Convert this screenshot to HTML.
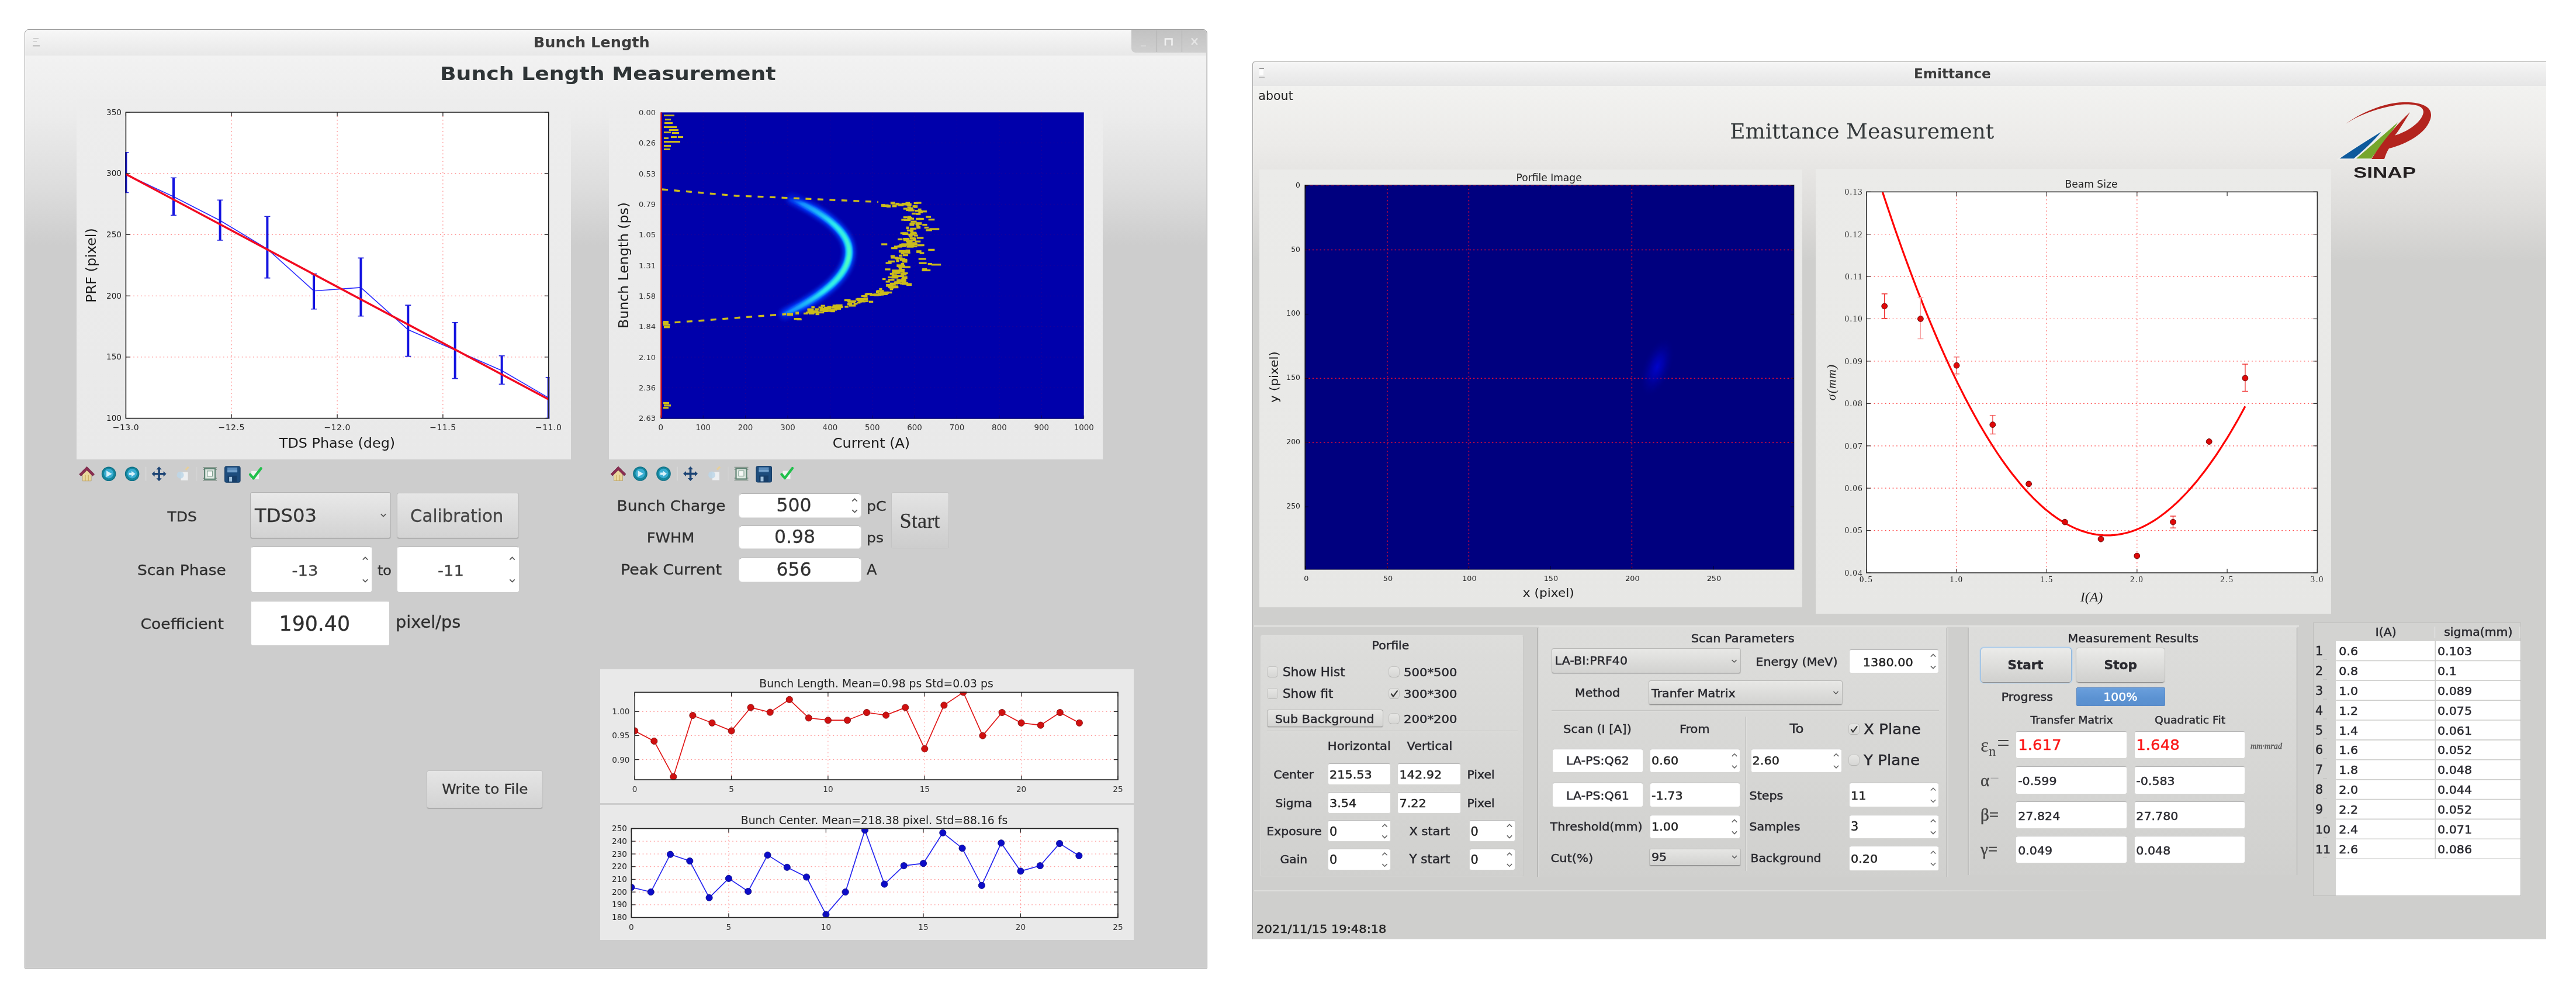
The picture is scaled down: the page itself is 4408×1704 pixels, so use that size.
<!DOCTYPE html>
<html><head><meta charset="utf-8"><title>Bunch Length / Emittance</title>
<style>
html,body{margin:0;padding:0;background:#fff;}
#page{filter:blur(0.75px);position:relative;width:4408px;height:1704px;overflow:hidden;background:#fff;font-family:"DejaVu Sans","Liberation Sans",sans-serif;}
#page>div{position:absolute;box-sizing:border-box;}
#ov{position:absolute;left:0;top:0;}
#ov text{font-family:"DejaVu Sans","Liberation Sans",sans-serif;}
#ov text.se{font-family:"DejaVu Serif","Liberation Serif",serif;}
#ov text.ls{font-family:"Liberation Serif","DejaVu Serif",serif;}
#ov text.lb{font-family:"Liberation Sans","DejaVu Sans",sans-serif;}
</style></head><body>
<div id="page">
<div style="left:41.5px;top:49.5px;width:2024.0px;height:1607.0px;background:#cdcdcd;border:1.5px solid #9c9c9c;border-radius:7px 7px 0 0;overflow:hidden;"></div>
<div style="left:43.0px;top:95.0px;width:2021.0px;height:1560.0px;background:linear-gradient(#f2f2f2 0px,#ececec 100px,#dddddd 225px,#cdcdcd 325px,#cdcdcd 100%);"></div>
<div style="left:43.0px;top:51.0px;width:2021.0px;height:44.0px;background:linear-gradient(#f7f7f7,#f0f0f0 45%,#e8e8e8);border-radius:6px 6px 0 0;"></div>
<div style="left:1936.0px;top:51.0px;width:128.0px;height:39.0px;background:linear-gradient(#c2c2c2,#cfcfcf);border-radius:0 6px 0 6px;border-bottom-left-radius:7px;"></div>
<div style="left:131.0px;top:169.0px;width:846.0px;height:617.0px;background:linear-gradient(#ededed,#e9e9e9);"></div>
<div style="left:1042.0px;top:172.0px;width:845.0px;height:614.0px;background:linear-gradient(#ededed,#e9e9e9);"></div>
<div style="left:427.5px;top:842.0px;width:241.5px;height:78.5px;background:linear-gradient(#e9e9e9,#d2d2d2);border:1px solid #b2b2b2;border-bottom-color:#8e8e8e;border-radius:4px;box-shadow:0 1px 1px rgba(0,0,0,.12);"></div>
<div style="left:679.0px;top:843.0px;width:209.0px;height:77.5px;background:linear-gradient(#e6e6e6,#d3d3d3);border:1px solid #bcbcbc;border-bottom-color:#8e8e8e;border-radius:4px;box-shadow:0 1px 1px rgba(0,0,0,.12);"></div>
<div style="left:429.5px;top:934.6px;width:206.5px;height:78.4px;background:#fff;border:1px solid #fff;border-top-color:#b4b4b4;border-radius:4px;"></div>
<div style="left:679.6px;top:934.6px;width:208.4px;height:78.4px;background:#fff;border:1px solid #fff;border-top-color:#b4b4b4;border-radius:4px;"></div>
<div style="left:429.5px;top:1028.0px;width:236.9px;height:76.4px;background:#fff;border:1px solid #fff;border-top-color:#b4b4b4;border-radius:3px;"></div>
<div style="left:729.5px;top:1317.5px;width:199.0px;height:65.0px;background:linear-gradient(#e5e5e5,#d3d3d3);border:1px solid #c2c2c2;border-bottom-color:#8e8e8e;border-radius:4px;box-shadow:0 1px 1px rgba(0,0,0,.12);"></div>
<div style="left:1264.0px;top:844.0px;width:210.0px;height:41.7px;background:#fff;border:1px solid #e4e4e4;border-top-color:#b4b4b4;border-radius:6px;"></div>
<div style="left:1525.0px;top:842.0px;width:98.5px;height:97.0px;background:linear-gradient(#e4e4e4,#d3d3d3 70%,#cdcdcd);border:1px solid #c4c4c4;border-bottom-color:#cacaca;border-radius:4px;"></div>
<div style="left:1264.0px;top:898.5px;width:210.0px;height:40.8px;background:#fff;border:1px solid #e4e4e4;border-top-color:#b4b4b4;border-radius:6px;"></div>
<div style="left:1264.0px;top:954.0px;width:210.0px;height:41.6px;background:#fff;border:1px solid #e4e4e4;border-top-color:#b4b4b4;border-radius:6px;"></div>
<div style="left:1027.0px;top:1144.5px;width:912.5px;height:229.5px;background:#e9e9e9;"></div>
<div style="left:1027.0px;top:1377.0px;width:912.5px;height:231.0px;background:#e9e9e9;"></div>
<div style="left:2142.5px;top:104.0px;width:2214.5px;height:1502.5px;background:#cfcfcd;border-left:1.5px solid #a6a6a6;border-top:1.5px solid #c4c4c4;border-radius:6px 0 0 0;overflow:hidden;"></div>
<div style="left:2144.0px;top:147.0px;width:2213.0px;height:1459.5px;background:linear-gradient(#f2f2f0 0px,#ecebe9 100px,#dddcda 215px,#cfcfcd 300px,#cfcfcd 100%);"></div>
<div style="left:2144.0px;top:105.5px;width:2213.0px;height:41.5px;background:linear-gradient(#f6f6f6,#eeeeee 45%,#e6e6e6);border-radius:5px 0 0 0;"></div>
<div style="left:2155.3px;top:290.0px;width:928.5px;height:749.2px;background:linear-gradient(#ebebe9,#e7e7e5);"></div>
<div style="left:3106.5px;top:289.0px;width:882.5px;height:761.0px;background:linear-gradient(#ebebe9,#e7e7e5);"></div>
<div style="left:2146.0px;top:1069.5px;width:1788.0px;height:2.0px;background:#e4e4e2;"></div>
<div style="left:2146.0px;top:1523.0px;width:1500.0px;height:2.0px;background:linear-gradient(90deg,#dededc,#dededc 70%,rgba(222,222,220,0));"></div>
<div style="left:2156.5px;top:1086.5px;width:450.5px;height:413.5px;background:linear-gradient(#dddddb,#d6d6d4 60%,#d0d0ce);border:1.5px solid #c8c8c6;border-top-color:#e2e2e0;border-left-color:#dcdcda;border-bottom-color:#d2d2d0;border-radius:3px;"></div>
<div style="left:2633.0px;top:1072.0px;width:698.0px;height:428.0px;background:linear-gradient(#dddddb,#d6d6d4 60%,#d0d0ce);"></div>
<div style="left:3369.0px;top:1072.0px;width:561.0px;height:425.0px;background:linear-gradient(#dddddb,#d6d6d4 60%,#d0d0ce);"></div>
<div style="left:2168.4px;top:1139.8px;width:19.0px;height:19.0px;background:linear-gradient(#e6e6e4,#d6d6d4);border:1.3px solid #c3c3c1;border-bottom-color:#b4b4b2;border-radius:5px;"></div>
<div style="left:2168.4px;top:1176.8px;width:19.0px;height:19.0px;background:linear-gradient(#e6e6e4,#d6d6d4);border:1.3px solid #c3c3c1;border-bottom-color:#b4b4b2;border-radius:5px;"></div>
<div style="left:2376.0px;top:1139.8px;width:19.0px;height:19.0px;background:linear-gradient(#e6e6e4,#d6d6d4);border:1.3px solid #c3c3c1;border-bottom-color:#b4b4b2;border-radius:6px;"></div>
<div style="left:2376.0px;top:1176.8px;width:19.0px;height:19.0px;background:linear-gradient(#e6e6e4,#d6d6d4);border:1.3px solid #c3c3c1;border-bottom-color:#b4b4b2;border-radius:6px;"></div>
<div style="left:2376.0px;top:1219.5px;width:19.0px;height:19.0px;background:linear-gradient(#e6e6e4,#d6d6d4);border:1.3px solid #c3c3c1;border-bottom-color:#b4b4b2;border-radius:6px;"></div>
<div style="left:2167.9px;top:1214.0px;width:198.8px;height:29.8px;background:linear-gradient(#e6e6e4,#d4d4d2);border:1px solid #b4b4b2;border-bottom-color:#8e8e8e;border-radius:4px;box-shadow:0 1px 1px rgba(0,0,0,.12);"></div>
<div style="left:2271.8px;top:1305.9px;width:108.0px;height:37.4px;background:#fff;border:1px solid #d6d6d4;border-top-color:#b4b4b4;border-radius:4px;"></div>
<div style="left:2391.2px;top:1305.9px;width:109.2px;height:37.4px;background:#fff;border:1px solid #d6d6d4;border-top-color:#b4b4b4;border-radius:4px;"></div>
<div style="left:2271.8px;top:1354.6px;width:108.0px;height:37.1px;background:#fff;border:1px solid #d6d6d4;border-top-color:#b4b4b4;border-radius:4px;"></div>
<div style="left:2391.2px;top:1354.6px;width:109.2px;height:37.1px;background:#fff;border:1px solid #d6d6d4;border-top-color:#b4b4b4;border-radius:4px;"></div>
<div style="left:2271.8px;top:1403.3px;width:108.0px;height:37.1px;background:#fff;border:1px solid #d6d6d4;border-top-color:#b4b4b4;border-radius:4px;"></div>
<div style="left:2513.6px;top:1403.3px;width:79.4px;height:37.1px;background:#fff;border:1px solid #d6d6d4;border-top-color:#b4b4b4;border-radius:4px;"></div>
<div style="left:2271.8px;top:1452.3px;width:108.0px;height:36.8px;background:#fff;border:1px solid #d6d6d4;border-top-color:#b4b4b4;border-radius:4px;"></div>
<div style="left:2513.6px;top:1452.3px;width:79.4px;height:36.8px;background:#fff;border:1px solid #d6d6d4;border-top-color:#b4b4b4;border-radius:4px;"></div>
<div style="left:2654.9px;top:1109.1px;width:323.8px;height:42.8px;background:linear-gradient(#e8e8e6,#d2d2d0);border:1px solid #b8b8b6;border-bottom-color:#8e8e8e;border-radius:4px;box-shadow:0 1px 1px rgba(0,0,0,.12);"></div>
<div style="left:3164.4px;top:1110.6px;width:153.4px;height:41.9px;background:#fff;border:1px solid #d6d6d4;border-top-color:#b4b4b4;border-radius:4px;"></div>
<div style="left:2820.9px;top:1164.1px;width:332.4px;height:41.6px;background:linear-gradient(#e8e8e6,#d2d2d0);border:1px solid #b8b8b6;border-bottom-color:#8e8e8e;border-radius:4px;box-shadow:0 1px 1px rgba(0,0,0,.12);"></div>
<div style="left:3163.0px;top:1238.0px;width:18.5px;height:18.5px;background:linear-gradient(#e6e6e4,#d6d6d4);border:1.3px solid #c3c3c1;border-bottom-color:#b4b4b2;border-radius:5px;"></div>
<div style="left:3163.0px;top:1291.0px;width:18.5px;height:18.5px;background:linear-gradient(#e6e6e4,#d6d6d4);border:1.3px solid #c3c3c1;border-bottom-color:#b4b4b2;border-radius:6px;"></div>
<div style="left:2656.4px;top:1281.4px;width:155.2px;height:40.8px;background:#fff;border:1px solid #d6d6d4;border-top-color:#b4b4b4;border-radius:4px;"></div>
<div style="left:2822.9px;top:1281.4px;width:155.2px;height:40.8px;background:#fff;border:1px solid #d6d6d4;border-top-color:#b4b4b4;border-radius:4px;"></div>
<div style="left:2995.5px;top:1281.4px;width:156.7px;height:40.8px;background:#fff;border:1px solid #d6d6d4;border-top-color:#b4b4b4;border-radius:4px;"></div>
<div style="left:2656.4px;top:1339.3px;width:155.2px;height:42.2px;background:#fff;border:1px solid #d6d6d4;border-top-color:#b4b4b4;border-radius:4px;"></div>
<div style="left:2822.9px;top:1339.3px;width:155.2px;height:42.2px;background:#fff;border:1px solid #d6d6d4;border-top-color:#b4b4b4;border-radius:4px;"></div>
<div style="left:3163.8px;top:1339.3px;width:154.0px;height:42.2px;background:#fff;border:1px solid #d6d6d4;border-top-color:#b4b4b4;border-radius:4px;"></div>
<div style="left:2822.9px;top:1393.7px;width:155.2px;height:41.7px;background:#fff;border:1px solid #d6d6d4;border-top-color:#b4b4b4;border-radius:4px;"></div>
<div style="left:3163.8px;top:1393.7px;width:154.0px;height:41.7px;background:#fff;border:1px solid #d6d6d4;border-top-color:#b4b4b4;border-radius:4px;"></div>
<div style="left:2821.5px;top:1452.0px;width:157.2px;height:28.5px;background:linear-gradient(#e6e6e4,#d2d2d0);border:1px solid #b8b8b6;border-bottom-color:#8e8e8e;border-radius:3px;box-shadow:0 1px 1px rgba(0,0,0,.12);"></div>
<div style="left:3163.8px;top:1447.0px;width:154.0px;height:42.8px;background:#fff;border:1px solid #d6d6d4;border-top-color:#b4b4b4;border-radius:4px;"></div>
<div style="left:3389.4px;top:1108.0px;width:155.6px;height:60.0px;background:linear-gradient(#ebebe9,#d0d0ce);border:1px solid #8fb6dc;border-bottom-color:#8e8e8e;border-radius:5px;box-shadow:0 1px 1px rgba(0,0,0,.12);box-shadow:0 0 0 1.5px #bcd6ee;"></div>
<div style="left:3552.1px;top:1108.0px;width:152.7px;height:60.0px;background:linear-gradient(#ebebe9,#d0d0ce);border:1px solid #bcbcba;border-bottom-color:#8e8e8e;border-radius:5px;box-shadow:0 1px 1px rgba(0,0,0,.12);"></div>
<div style="left:3552.6px;top:1176.2px;width:152.2px;height:31.5px;background:linear-gradient(#6a9fdc,#5b92d2 60%,#5a8fce);border:1px solid #5586c4;border-radius:2px;"></div>
<div style="left:3449.2px;top:1250.6px;width:191.3px;height:47.3px;background:#fff;border:1px solid #d6d6d4;border-top-color:#b4b4b4;border-radius:4px;"></div>
<div style="left:3651.8px;top:1250.6px;width:190.5px;height:47.3px;background:#fff;border:1px solid #d6d6d4;border-top-color:#b4b4b4;border-radius:4px;"></div>
<div style="left:3449.2px;top:1310.5px;width:191.3px;height:48.4px;background:#fff;border:1px solid #d6d6d4;border-top-color:#b4b4b4;border-radius:4px;"></div>
<div style="left:3651.8px;top:1310.5px;width:190.5px;height:48.4px;background:#fff;border:1px solid #d6d6d4;border-top-color:#b4b4b4;border-radius:4px;"></div>
<div style="left:3449.2px;top:1370.5px;width:191.3px;height:47.2px;background:#fff;border:1px solid #d6d6d4;border-top-color:#b4b4b4;border-radius:4px;"></div>
<div style="left:3651.8px;top:1370.5px;width:190.5px;height:47.2px;background:#fff;border:1px solid #d6d6d4;border-top-color:#b4b4b4;border-radius:4px;"></div>
<div style="left:3449.2px;top:1430.3px;width:191.3px;height:47.2px;background:#fff;border:1px solid #d6d6d4;border-top-color:#b4b4b4;border-radius:4px;"></div>
<div style="left:3651.8px;top:1430.3px;width:190.5px;height:47.2px;background:#fff;border:1px solid #d6d6d4;border-top-color:#b4b4b4;border-radius:4px;"></div>
<div style="left:3957.7px;top:1065.0px;width:356.3px;height:468.0px;background:#d3d3d1;border:1.3px solid #bdbdbb;"></div>
<div style="left:3997.3px;top:1096.5px;width:315.7px;height:435.5px;background:#fff;"></div>
<svg id="ov" width="4408" height="1704" viewBox="0 0 4408 1704">
<defs>
<filter id="bl3" x="-20%" y="-20%" width="140%" height="140%"><feGaussianBlur stdDeviation="3.2"/></filter>
<filter id="bl1" x="-20%" y="-20%" width="140%" height="140%"><feGaussianBlur stdDeviation="1.1"/></filter>
<filter id="bl05" x="-20%" y="-20%" width="140%" height="140%"><feGaussianBlur stdDeviation="0.6"/></filter>
<linearGradient id="cres" gradientUnits="userSpaceOnUse" x1="0" y1="338" x2="0" y2="544"><stop offset="0" stop-color="#0a3cff" stop-opacity="0"/><stop offset="0.05" stop-color="#1490ff"/><stop offset="0.22" stop-color="#2ce8f0"/><stop offset="0.5" stop-color="#50ffc0"/><stop offset="0.78" stop-color="#2ce8f0"/><stop offset="0.95" stop-color="#1490ff"/><stop offset="1" stop-color="#0a3cff" stop-opacity="0"/></linearGradient>
<linearGradient id="cresm" gradientUnits="userSpaceOnUse" x1="0" y1="336" x2="0" y2="542"><stop offset="0" stop-color="#0a50ff" stop-opacity="0"/><stop offset="0.1" stop-color="#0c70ff" stop-opacity="0.9"/><stop offset="0.3" stop-color="#10b0ff"/><stop offset="0.5" stop-color="#14c8ff"/><stop offset="0.7" stop-color="#10b0ff"/><stop offset="0.9" stop-color="#0c70ff" stop-opacity="0.9"/><stop offset="1" stop-color="#0a50ff" stop-opacity="0"/></linearGradient>
<linearGradient id="cresg" gradientUnits="userSpaceOnUse" x1="0" y1="330" x2="0" y2="552"><stop offset="0" stop-color="#0030ff" stop-opacity="0.2"/><stop offset="0.12" stop-color="#0038ff" stop-opacity="0.95"/><stop offset="0.5" stop-color="#0050ff" stop-opacity="0.95"/><stop offset="0.88" stop-color="#0038ff" stop-opacity="0.95"/><stop offset="1" stop-color="#0030ff" stop-opacity="0.2"/></linearGradient>
<radialGradient id="spot"><stop offset="0" stop-color="#0004d0" stop-opacity="0.95"/><stop offset="0.4" stop-color="#0002b8" stop-opacity="0.7"/><stop offset="1" stop-color="#000090" stop-opacity="0"/></radialGradient>
</defs>
<line x1="1979.5" y1="52.0" x2="1979.5" y2="89.0" stroke="#b4b4b4" stroke-width="1.2"/>
<line x1="2022.5" y1="52.0" x2="2022.5" y2="89.0" stroke="#b4b4b4" stroke-width="1.2"/>
<line x1="1952.0" y1="78.5" x2="1961.0" y2="78.5" stroke="#dcdcdc" stroke-width="1.8"/>
<rect x="1994" y="66.5" width="11.5" height="10" fill="none" stroke="#f0f0f0" stroke-width="2.6"/>
<rect x="1995.5" y="72.5" width="8.5" height="5.5" fill="#c9c9c9"/>
<path d="M2039 65.5 L2049 76.5 M2049 65.5 L2039 76.5" stroke="#e6e6e6" stroke-width="2.6" fill="none"/>
<rect x="57.0" y="65.0" width="9.0" height="2.0" fill="#cfcfcf"/>
<rect x="57.0" y="70.0" width="6.0" height="2.0" fill="#d4d4d4"/>
<rect x="56.0" y="77.0" width="12.0" height="2.5" fill="#c4c4c4"/>
<text x="912.8" y="81.3" font-size="24.20" font-weight="bold" fill="#3c3c3c" textLength="198.9" lengthAdjust="spacingAndGlyphs">Bunch Length</text>
<text x="753.0" y="137.3" font-size="32.40" font-weight="bold" fill="#2e3436" textLength="574.7" lengthAdjust="spacingAndGlyphs">Bunch Length Measurement</text>
<rect x="215.4" y="192.0" width="723.3" height="523.6" fill="#fff"/>
<line x1="396.2" y1="192.0" x2="396.2" y2="715.6" stroke="#ff0000" stroke-width="1.0" stroke-dasharray="1.8 4.6" opacity="0.55"/>
<line x1="577.1" y1="192.0" x2="577.1" y2="715.6" stroke="#ff0000" stroke-width="1.0" stroke-dasharray="1.8 4.6" opacity="0.55"/>
<line x1="757.9" y1="192.0" x2="757.9" y2="715.6" stroke="#ff0000" stroke-width="1.0" stroke-dasharray="1.8 4.6" opacity="0.55"/>
<line x1="215.4" y1="296.7" x2="938.7" y2="296.7" stroke="#ff0000" stroke-width="1.0" stroke-dasharray="1.8 4.6" opacity="0.55"/>
<line x1="215.4" y1="401.4" x2="938.7" y2="401.4" stroke="#ff0000" stroke-width="1.0" stroke-dasharray="1.8 4.6" opacity="0.55"/>
<line x1="215.4" y1="506.2" x2="938.7" y2="506.2" stroke="#ff0000" stroke-width="1.0" stroke-dasharray="1.8 4.6" opacity="0.55"/>
<line x1="215.4" y1="610.9" x2="938.7" y2="610.9" stroke="#ff0000" stroke-width="1.0" stroke-dasharray="1.8 4.6" opacity="0.55"/>
<clipPath id="c1"><rect x="214" y="191" width="726.5" height="525.5"/></clipPath>
<g clip-path="url(#c1)">
<path d="M215.4 298.4 L297.0 336.5 L376.6 377.3 L457.4 425.8 L537.0 497.7 L617.5 491.9 L698.3 564.1 L778.7 599.0 L858.7 634.0 L938.7 680.6" stroke="#2a2aff" stroke-width="1.6" fill="none"/>
<line x1="215.4" y1="260.7" x2="215.4" y2="329.5" stroke="#1414e0" stroke-width="4"/>
<line x1="210.4" y1="260.7" x2="220.4" y2="260.7" stroke="#2222dd" stroke-width="1.6"/>
<line x1="210.4" y1="329.5" x2="220.4" y2="329.5" stroke="#2222dd" stroke-width="1.6"/>
<line x1="297.0" y1="304.2" x2="297.0" y2="368.3" stroke="#1414e0" stroke-width="4"/>
<line x1="292.0" y1="304.2" x2="302.0" y2="304.2" stroke="#2222dd" stroke-width="1.6"/>
<line x1="292.0" y1="368.3" x2="302.0" y2="368.3" stroke="#2222dd" stroke-width="1.6"/>
<line x1="376.6" y1="342.3" x2="376.6" y2="411.0" stroke="#1414e0" stroke-width="4"/>
<line x1="371.6" y1="342.3" x2="381.6" y2="342.3" stroke="#2222dd" stroke-width="1.6"/>
<line x1="371.6" y1="411.0" x2="381.6" y2="411.0" stroke="#2222dd" stroke-width="1.6"/>
<line x1="457.4" y1="370.3" x2="457.4" y2="475.6" stroke="#1414e0" stroke-width="4"/>
<line x1="452.4" y1="370.3" x2="462.4" y2="370.3" stroke="#2222dd" stroke-width="1.6"/>
<line x1="452.4" y1="475.6" x2="462.4" y2="475.6" stroke="#2222dd" stroke-width="1.6"/>
<line x1="537.0" y1="468.6" x2="537.0" y2="528.8" stroke="#1414e0" stroke-width="4"/>
<line x1="532.0" y1="468.6" x2="542.0" y2="468.6" stroke="#2222dd" stroke-width="1.6"/>
<line x1="532.0" y1="528.8" x2="542.0" y2="528.8" stroke="#2222dd" stroke-width="1.6"/>
<line x1="617.5" y1="441.4" x2="617.5" y2="540.8" stroke="#1414e0" stroke-width="4"/>
<line x1="612.5" y1="441.4" x2="622.5" y2="441.4" stroke="#2222dd" stroke-width="1.6"/>
<line x1="612.5" y1="540.8" x2="622.5" y2="540.8" stroke="#2222dd" stroke-width="1.6"/>
<line x1="698.3" y1="522.1" x2="698.3" y2="609.6" stroke="#1414e0" stroke-width="4"/>
<line x1="693.3" y1="522.1" x2="703.3" y2="522.1" stroke="#2222dd" stroke-width="1.6"/>
<line x1="693.3" y1="609.6" x2="703.3" y2="609.6" stroke="#2222dd" stroke-width="1.6"/>
<line x1="778.7" y1="551.7" x2="778.7" y2="647.6" stroke="#1414e0" stroke-width="4"/>
<line x1="773.7" y1="551.7" x2="783.7" y2="551.7" stroke="#2222dd" stroke-width="1.6"/>
<line x1="773.7" y1="647.6" x2="783.7" y2="647.6" stroke="#2222dd" stroke-width="1.6"/>
<line x1="858.7" y1="608.8" x2="858.7" y2="657.3" stroke="#1414e0" stroke-width="4"/>
<line x1="853.7" y1="608.8" x2="863.7" y2="608.8" stroke="#2222dd" stroke-width="1.6"/>
<line x1="853.7" y1="657.3" x2="863.7" y2="657.3" stroke="#2222dd" stroke-width="1.6"/>
<line x1="938.7" y1="645.7" x2="938.7" y2="715.6" stroke="#1414e0" stroke-width="4"/>
<line x1="933.7" y1="645.7" x2="943.7" y2="645.7" stroke="#2222dd" stroke-width="1.6"/>
<line x1="933.7" y1="715.6" x2="943.7" y2="715.6" stroke="#2222dd" stroke-width="1.6"/>
<line x1="215.4" y1="297.9" x2="938.7" y2="683.3" stroke="#f20a20" stroke-width="3.5"/>
</g>
<line x1="215.4" y1="715.6" x2="215.4" y2="708.6" stroke="#222" stroke-width="1.2"/>
<line x1="215.4" y1="192.0" x2="215.4" y2="199.0" stroke="#222" stroke-width="1.2"/>
<line x1="396.2" y1="715.6" x2="396.2" y2="708.6" stroke="#222" stroke-width="1.2"/>
<line x1="396.2" y1="192.0" x2="396.2" y2="199.0" stroke="#222" stroke-width="1.2"/>
<line x1="577.1" y1="715.6" x2="577.1" y2="708.6" stroke="#222" stroke-width="1.2"/>
<line x1="577.1" y1="192.0" x2="577.1" y2="199.0" stroke="#222" stroke-width="1.2"/>
<line x1="757.9" y1="715.6" x2="757.9" y2="708.6" stroke="#222" stroke-width="1.2"/>
<line x1="757.9" y1="192.0" x2="757.9" y2="199.0" stroke="#222" stroke-width="1.2"/>
<line x1="938.7" y1="715.6" x2="938.7" y2="708.6" stroke="#222" stroke-width="1.2"/>
<line x1="938.7" y1="192.0" x2="938.7" y2="199.0" stroke="#222" stroke-width="1.2"/>
<line x1="215.4" y1="192.0" x2="222.4" y2="192.0" stroke="#222" stroke-width="1.2"/>
<line x1="938.7" y1="192.0" x2="931.7" y2="192.0" stroke="#222" stroke-width="1.2"/>
<line x1="215.4" y1="296.7" x2="222.4" y2="296.7" stroke="#222" stroke-width="1.2"/>
<line x1="938.7" y1="296.7" x2="931.7" y2="296.7" stroke="#222" stroke-width="1.2"/>
<line x1="215.4" y1="401.4" x2="222.4" y2="401.4" stroke="#222" stroke-width="1.2"/>
<line x1="938.7" y1="401.4" x2="931.7" y2="401.4" stroke="#222" stroke-width="1.2"/>
<line x1="215.4" y1="506.2" x2="222.4" y2="506.2" stroke="#222" stroke-width="1.2"/>
<line x1="938.7" y1="506.2" x2="931.7" y2="506.2" stroke="#222" stroke-width="1.2"/>
<line x1="215.4" y1="610.9" x2="222.4" y2="610.9" stroke="#222" stroke-width="1.2"/>
<line x1="938.7" y1="610.9" x2="931.7" y2="610.9" stroke="#222" stroke-width="1.2"/>
<line x1="215.4" y1="715.6" x2="222.4" y2="715.6" stroke="#222" stroke-width="1.2"/>
<line x1="938.7" y1="715.6" x2="931.7" y2="715.6" stroke="#222" stroke-width="1.2"/>
<rect x="215.4" y="192.0" width="723.3" height="523.6" fill="none" stroke="#222" stroke-width="1.6"/>
<text x="208.0" y="196.5" font-size="13.60" text-anchor="end" fill="#222">350</text>
<text x="208.0" y="301.2" font-size="13.60" text-anchor="end" fill="#222">300</text>
<text x="208.0" y="405.9" font-size="13.60" text-anchor="end" fill="#222">250</text>
<text x="208.0" y="510.7" font-size="13.60" text-anchor="end" fill="#222">200</text>
<text x="208.0" y="615.4" font-size="13.60" text-anchor="end" fill="#222">150</text>
<text x="208.0" y="720.1" font-size="13.60" text-anchor="end" fill="#222">100</text>
<text x="215.4" y="735.5" font-size="14.00" text-anchor="middle" fill="#222" letter-spacing="0.5">−13.0</text>
<text x="396.2" y="735.5" font-size="14.00" text-anchor="middle" fill="#222" letter-spacing="0.5">−12.5</text>
<text x="577.1" y="735.5" font-size="14.00" text-anchor="middle" fill="#222" letter-spacing="0.5">−12.0</text>
<text x="757.9" y="735.5" font-size="14.00" text-anchor="middle" fill="#222" letter-spacing="0.5">−11.5</text>
<text x="938.7" y="735.5" font-size="14.00" text-anchor="middle" fill="#222" letter-spacing="0.5">−11.0</text>
<text x="577.0" y="765.5" font-size="22.60" text-anchor="middle" fill="#1a1a1a" textLength="198.4" lengthAdjust="spacingAndGlyphs">TDS Phase (deg)</text>
<text x="163.5" y="454.0" font-size="22.60" text-anchor="middle" fill="#1a1a1a" transform="rotate(-90 163.5 454.0)" textLength="127.6" lengthAdjust="spacingAndGlyphs">PRF (pixel)</text>
<rect x="1130.8" y="192.3" width="723.9" height="523.4" fill="#0000ab"/>
<line x1="1203.2" y1="192.3" x2="1203.2" y2="715.7" stroke="#ff0000" stroke-width="1" stroke-dasharray="1.8 4.6" opacity="0.13"/>
<line x1="1275.6" y1="192.3" x2="1275.6" y2="715.7" stroke="#ff0000" stroke-width="1" stroke-dasharray="1.8 4.6" opacity="0.13"/>
<line x1="1348.0" y1="192.3" x2="1348.0" y2="715.7" stroke="#ff0000" stroke-width="1" stroke-dasharray="1.8 4.6" opacity="0.13"/>
<line x1="1420.4" y1="192.3" x2="1420.4" y2="715.7" stroke="#ff0000" stroke-width="1" stroke-dasharray="1.8 4.6" opacity="0.13"/>
<line x1="1492.8" y1="192.3" x2="1492.8" y2="715.7" stroke="#ff0000" stroke-width="1" stroke-dasharray="1.8 4.6" opacity="0.13"/>
<line x1="1565.1" y1="192.3" x2="1565.1" y2="715.7" stroke="#ff0000" stroke-width="1" stroke-dasharray="1.8 4.6" opacity="0.13"/>
<line x1="1637.5" y1="192.3" x2="1637.5" y2="715.7" stroke="#ff0000" stroke-width="1" stroke-dasharray="1.8 4.6" opacity="0.13"/>
<line x1="1709.9" y1="192.3" x2="1709.9" y2="715.7" stroke="#ff0000" stroke-width="1" stroke-dasharray="1.8 4.6" opacity="0.13"/>
<line x1="1782.3" y1="192.3" x2="1782.3" y2="715.7" stroke="#ff0000" stroke-width="1" stroke-dasharray="1.8 4.6" opacity="0.13"/>
<line x1="1130.8" y1="244.6" x2="1854.7" y2="244.6" stroke="#ff0000" stroke-width="1" stroke-dasharray="1.8 4.6" opacity="0.13"/>
<line x1="1130.8" y1="297.0" x2="1854.7" y2="297.0" stroke="#ff0000" stroke-width="1" stroke-dasharray="1.8 4.6" opacity="0.13"/>
<line x1="1130.8" y1="349.3" x2="1854.7" y2="349.3" stroke="#ff0000" stroke-width="1" stroke-dasharray="1.8 4.6" opacity="0.13"/>
<line x1="1130.8" y1="401.7" x2="1854.7" y2="401.7" stroke="#ff0000" stroke-width="1" stroke-dasharray="1.8 4.6" opacity="0.13"/>
<line x1="1130.8" y1="454.0" x2="1854.7" y2="454.0" stroke="#ff0000" stroke-width="1" stroke-dasharray="1.8 4.6" opacity="0.13"/>
<line x1="1130.8" y1="506.3" x2="1854.7" y2="506.3" stroke="#ff0000" stroke-width="1" stroke-dasharray="1.8 4.6" opacity="0.13"/>
<line x1="1130.8" y1="558.7" x2="1854.7" y2="558.7" stroke="#ff0000" stroke-width="1" stroke-dasharray="1.8 4.6" opacity="0.13"/>
<line x1="1130.8" y1="611.0" x2="1854.7" y2="611.0" stroke="#ff0000" stroke-width="1" stroke-dasharray="1.8 4.6" opacity="0.13"/>
<line x1="1130.8" y1="663.4" x2="1854.7" y2="663.4" stroke="#ff0000" stroke-width="1" stroke-dasharray="1.8 4.6" opacity="0.13"/>
<clipPath id="c2"><rect x="1130.8" y="192.3" width="723.9" height="523.4"/></clipPath>
<g clip-path="url(#c2)">
<path d="M1355.0 339.3 L1362.0 342.6 L1368.6 345.9 L1375.1 349.2 L1381.3 352.5 L1387.2 355.9 L1392.9 359.2 L1398.3 362.5 L1403.4 365.8 L1408.4 369.1 L1413.0 372.4 L1417.4 375.7 L1421.5 379.0 L1425.4 382.4 L1429.0 385.7 L1432.4 389.0 L1435.5 392.3 L1438.4 395.6 L1441.0 398.9 L1443.3 402.2 L1445.4 405.5 L1447.3 408.8 L1448.9 412.2 L1450.2 415.5 L1451.3 418.8 L1452.1 422.1 L1452.6 425.4 L1452.9 428.7 L1453.0 432.0 L1452.8 435.3 L1452.4 438.6 L1451.8 442.0 L1451.0 445.3 L1450.0 448.6 L1448.8 451.9 L1447.4 455.2 L1445.7 458.5 L1443.9 461.8 L1441.8 465.1 L1439.5 468.5 L1437.0 471.8 L1434.3 475.1 L1431.4 478.4 L1428.3 481.7 L1425.0 485.0 L1421.4 488.3 L1417.7 491.6 L1413.7 494.9 L1409.5 498.3 L1405.1 501.6 L1400.6 504.9 L1395.7 508.2 L1390.7 511.5 L1385.5 514.8 L1380.1 518.1 L1374.4 521.4 L1368.6 524.8 L1362.5 528.1 L1356.2 531.4 L1349.7 534.7 L1343.0 538.0" stroke="url(#cresg)" stroke-width="20" fill="none" filter="url(#bl3)" stroke-linecap="round"/>
<path d="M1355.0 339.3 L1362.0 342.6 L1368.6 345.9 L1375.1 349.2 L1381.3 352.5 L1387.2 355.9 L1392.9 359.2 L1398.3 362.5 L1403.4 365.8 L1408.4 369.1 L1413.0 372.4 L1417.4 375.7 L1421.5 379.0 L1425.4 382.4 L1429.0 385.7 L1432.4 389.0 L1435.5 392.3 L1438.4 395.6 L1441.0 398.9 L1443.3 402.2 L1445.4 405.5 L1447.3 408.8 L1448.9 412.2 L1450.2 415.5 L1451.3 418.8 L1452.1 422.1 L1452.6 425.4 L1452.9 428.7 L1453.0 432.0 L1452.8 435.3 L1452.4 438.6 L1451.8 442.0 L1451.0 445.3 L1450.0 448.6 L1448.8 451.9 L1447.4 455.2 L1445.7 458.5 L1443.9 461.8 L1441.8 465.1 L1439.5 468.5 L1437.0 471.8 L1434.3 475.1 L1431.4 478.4 L1428.3 481.7 L1425.0 485.0 L1421.4 488.3 L1417.7 491.6 L1413.7 494.9 L1409.5 498.3 L1405.1 501.6 L1400.6 504.9 L1395.7 508.2 L1390.7 511.5 L1385.5 514.8 L1380.1 518.1 L1374.4 521.4 L1368.6 524.8 L1362.5 528.1 L1356.2 531.4 L1349.7 534.7 L1343.0 538.0" stroke="url(#cresm)" stroke-width="12.5" fill="none" filter="url(#bl1)" stroke-linecap="round"/>
<path d="M1355.0 339.3 L1362.0 342.6 L1368.6 345.9 L1375.1 349.2 L1381.3 352.5 L1387.2 355.9 L1392.9 359.2 L1398.3 362.5 L1403.4 365.8 L1408.4 369.1 L1413.0 372.4 L1417.4 375.7 L1421.5 379.0 L1425.4 382.4 L1429.0 385.7 L1432.4 389.0 L1435.5 392.3 L1438.4 395.6 L1441.0 398.9 L1443.3 402.2 L1445.4 405.5 L1447.3 408.8 L1448.9 412.2 L1450.2 415.5 L1451.3 418.8 L1452.1 422.1 L1452.6 425.4 L1452.9 428.7 L1453.0 432.0 L1452.8 435.3 L1452.4 438.6 L1451.8 442.0 L1451.0 445.3 L1450.0 448.6 L1448.8 451.9 L1447.4 455.2 L1445.7 458.5 L1443.9 461.8 L1441.8 465.1 L1439.5 468.5 L1437.0 471.8 L1434.3 475.1 L1431.4 478.4 L1428.3 481.7 L1425.0 485.0 L1421.4 488.3 L1417.7 491.6 L1413.7 494.9 L1409.5 498.3 L1405.1 501.6 L1400.6 504.9 L1395.7 508.2 L1390.7 511.5 L1385.5 514.8 L1380.1 518.1 L1374.4 521.4 L1368.6 524.8 L1362.5 528.1 L1356.2 531.4 L1349.7 534.7 L1343.0 538.0" stroke="url(#cres)" stroke-width="6.6" fill="none" filter="url(#bl1)" stroke-linecap="round"/>
<path d="M1133 324 L1180 328 L1260 335 L1305 336.6 L1400 341 L1503 345.5" stroke="#cbbb1c" stroke-width="3.3" fill="none" stroke-dasharray="10 10.5"/>
<path d="M1134 553 L1200 548.5 L1270 543 L1345 537.5" stroke="#cbbb1c" stroke-width="3.3" fill="none" stroke-dasharray="10 10.5"/>
<rect x="1536.1" y="407.8" width="8.3" height="3.3" fill="#cbbb1c"/>
<rect x="1552.2" y="370.8" width="8.6" height="3.3" fill="#cbbb1c"/>
<rect x="1554.2" y="358.3" width="10.7" height="3.3" fill="#cbbb1c"/>
<rect x="1549.5" y="426.9" width="7.8" height="4.6" fill="#cbbb1c"/>
<rect x="1539.1" y="435.6" width="5.1" height="3.3" fill="#cbbb1c"/>
<rect x="1552.5" y="353.6" width="6.3" height="3.3" fill="#cbbb1c"/>
<rect x="1546.2" y="428.1" width="9.1" height="3.3" fill="#cbbb1c"/>
<rect x="1542.4" y="416.3" width="9.5" height="4.6" fill="#cbbb1c"/>
<rect x="1563.6" y="346.0" width="7.8" height="3.3" fill="#cbbb1c"/>
<rect x="1545.2" y="443.0" width="7.2" height="3.3" fill="#cbbb1c"/>
<rect x="1564.0" y="416.1" width="5.8" height="3.3" fill="#cbbb1c"/>
<rect x="1534.3" y="462.2" width="7.7" height="3.3" fill="#cbbb1c"/>
<rect x="1536.5" y="461.6" width="11.4" height="4.6" fill="#cbbb1c"/>
<rect x="1557.9" y="396.5" width="10.0" height="4.6" fill="#cbbb1c"/>
<rect x="1545.7" y="355.4" width="6.9" height="3.3" fill="#cbbb1c"/>
<rect x="1550.6" y="387.6" width="5.1" height="4.6" fill="#cbbb1c"/>
<rect x="1541.5" y="450.0" width="5.7" height="3.3" fill="#cbbb1c"/>
<rect x="1558.9" y="409.5" width="8.4" height="3.3" fill="#cbbb1c"/>
<rect x="1561.9" y="406.4" width="5.9" height="4.6" fill="#cbbb1c"/>
<rect x="1571.4" y="361.4" width="7.9" height="3.3" fill="#cbbb1c"/>
<rect x="1567.5" y="345.4" width="9.1" height="3.3" fill="#cbbb1c"/>
<rect x="1542.3" y="374.4" width="7.8" height="3.3" fill="#cbbb1c"/>
<rect x="1561.6" y="351.2" width="5.1" height="3.3" fill="#cbbb1c"/>
<rect x="1540.3" y="459.9" width="7.7" height="3.3" fill="#cbbb1c"/>
<rect x="1550.2" y="357.8" width="9.2" height="3.3" fill="#cbbb1c"/>
<rect x="1541.5" y="430.6" width="5.9" height="4.6" fill="#cbbb1c"/>
<rect x="1537.5" y="460.2" width="9.4" height="3.3" fill="#cbbb1c"/>
<rect x="1536.2" y="470.7" width="10.7" height="3.3" fill="#cbbb1c"/>
<rect x="1543.6" y="444.8" width="8.9" height="4.6" fill="#cbbb1c"/>
<rect x="1541.2" y="466.4" width="9.2" height="4.6" fill="#cbbb1c"/>
<rect x="1563.5" y="351.2" width="6.8" height="4.6" fill="#cbbb1c"/>
<rect x="1566.4" y="380.2" width="10.8" height="4.6" fill="#cbbb1c"/>
<rect x="1568.5" y="385.8" width="5.5" height="3.3" fill="#cbbb1c"/>
<rect x="1565.7" y="411.5" width="9.6" height="3.3" fill="#cbbb1c"/>
<rect x="1567.6" y="384.0" width="5.1" height="3.3" fill="#cbbb1c"/>
<rect x="1554.9" y="402.1" width="6.7" height="3.3" fill="#cbbb1c"/>
<rect x="1552.9" y="369.7" width="5.9" height="3.3" fill="#cbbb1c"/>
<rect x="1567.2" y="364.5" width="8.2" height="3.3" fill="#cbbb1c"/>
<rect x="1538.1" y="436.0" width="6.0" height="3.3" fill="#cbbb1c"/>
<rect x="1519.4" y="472.8" width="8.3" height="3.3" fill="#cbbb1c"/>
<rect x="1539.7" y="441.4" width="9.5" height="4.6" fill="#cbbb1c"/>
<rect x="1555.5" y="354.6" width="7.2" height="3.3" fill="#cbbb1c"/>
<rect x="1539.9" y="483.3" width="10.2" height="3.3" fill="#cbbb1c"/>
<rect x="1537.2" y="454.8" width="11.4" height="3.3" fill="#cbbb1c"/>
<rect x="1551.3" y="357.1" width="11.0" height="3.3" fill="#cbbb1c"/>
<rect x="1531.7" y="463.9" width="9.0" height="4.6" fill="#cbbb1c"/>
<rect x="1563.3" y="397.7" width="5.6" height="3.3" fill="#cbbb1c"/>
<rect x="1529.6" y="482.4" width="11.2" height="3.3" fill="#cbbb1c"/>
<rect x="1557.2" y="399.0" width="8.1" height="3.3" fill="#cbbb1c"/>
<rect x="1539.0" y="416.9" width="8.6" height="3.3" fill="#cbbb1c"/>
<rect x="1537.9" y="427.7" width="9.9" height="4.6" fill="#cbbb1c"/>
<rect x="1534.3" y="452.3" width="9.6" height="4.6" fill="#cbbb1c"/>
<rect x="1567.7" y="380.7" width="9.7" height="3.3" fill="#cbbb1c"/>
<rect x="1550.5" y="416.9" width="10.3" height="3.3" fill="#cbbb1c"/>
<rect x="1523.8" y="436.4" width="7.3" height="3.3" fill="#cbbb1c"/>
<rect x="1567.1" y="372.7" width="8.0" height="3.3" fill="#cbbb1c"/>
<rect x="1522.7" y="466.8" width="7.2" height="3.3" fill="#cbbb1c"/>
<rect x="1566.7" y="363.9" width="7.5" height="3.3" fill="#cbbb1c"/>
<rect x="1545.8" y="442.8" width="6.2" height="4.6" fill="#cbbb1c"/>
<rect x="1550.1" y="409.7" width="11.5" height="4.6" fill="#cbbb1c"/>
<rect x="1544.2" y="397.5" width="10.0" height="4.6" fill="#cbbb1c"/>
<rect x="1557.3" y="389.6" width="10.8" height="3.3" fill="#cbbb1c"/>
<rect x="1544.5" y="465.8" width="9.0" height="3.3" fill="#cbbb1c"/>
<rect x="1545.1" y="435.0" width="8.9" height="3.3" fill="#cbbb1c"/>
<rect x="1563.9" y="401.3" width="6.9" height="3.3" fill="#cbbb1c"/>
<rect x="1546.0" y="455.3" width="11.9" height="3.3" fill="#cbbb1c"/>
<rect x="1545.2" y="407.0" width="10.7" height="3.3" fill="#cbbb1c"/>
<rect x="1530.8" y="439.2" width="6.4" height="4.6" fill="#cbbb1c"/>
<rect x="1557.2" y="380.7" width="8.7" height="3.3" fill="#cbbb1c"/>
<rect x="1545.7" y="370.1" width="6.9" height="3.3" fill="#cbbb1c"/>
<rect x="1557.7" y="419.8" width="12.0" height="3.3" fill="#cbbb1c"/>
<rect x="1553.4" y="399.7" width="10.5" height="3.3" fill="#cbbb1c"/>
<rect x="1570.7" y="356.7" width="5.9" height="4.6" fill="#cbbb1c"/>
<rect x="1552.8" y="372.5" width="11.2" height="3.3" fill="#cbbb1c"/>
<rect x="1540.7" y="397.3" width="10.6" height="3.3" fill="#cbbb1c"/>
<rect x="1546.0" y="409.3" width="9.6" height="3.3" fill="#cbbb1c"/>
<rect x="1566.0" y="359.0" width="11.5" height="3.3" fill="#cbbb1c"/>
<rect x="1546.9" y="374.8" width="11.3" height="3.3" fill="#cbbb1c"/>
<rect x="1515.6" y="480.2" width="7.2" height="3.3" fill="#cbbb1c"/>
<rect x="1557.3" y="392.8" width="5.6" height="4.6" fill="#cbbb1c"/>
<rect x="1551.8" y="392.6" width="11.4" height="3.3" fill="#cbbb1c"/>
<rect x="1537.9" y="457.0" width="5.4" height="3.3" fill="#cbbb1c"/>
<rect x="1552.7" y="369.2" width="6.0" height="3.3" fill="#cbbb1c"/>
<rect x="1542.9" y="482.7" width="11.3" height="4.6" fill="#cbbb1c"/>
<rect x="1509.9" y="475.9" width="5.6" height="3.3" fill="#cbbb1c"/>
<rect x="1556.5" y="406.0" width="8.9" height="3.3" fill="#cbbb1c"/>
<rect x="1557.6" y="416.8" width="7.2" height="4.6" fill="#cbbb1c"/>
<rect x="1519.5" y="477.1" width="11.1" height="3.3" fill="#cbbb1c"/>
<rect x="1568.3" y="386.7" width="6.9" height="4.6" fill="#cbbb1c"/>
<rect x="1568.7" y="373.1" width="8.8" height="3.3" fill="#cbbb1c"/>
<rect x="1568.1" y="428.2" width="8.6" height="4.6" fill="#cbbb1c"/>
<rect x="1551.5" y="420.4" width="11.9" height="3.3" fill="#cbbb1c"/>
<rect x="1551.3" y="412.5" width="8.8" height="4.6" fill="#cbbb1c"/>
<rect x="1526.3" y="471.8" width="10.6" height="4.6" fill="#cbbb1c"/>
<rect x="1556.3" y="381.9" width="8.0" height="4.6" fill="#cbbb1c"/>
<rect x="1552.6" y="417.1" width="5.8" height="4.6" fill="#cbbb1c"/>
<rect x="1547.1" y="430.6" width="10.5" height="3.3" fill="#cbbb1c"/>
<rect x="1552.7" y="350.3" width="6.1" height="3.3" fill="#cbbb1c"/>
<rect x="1535.1" y="440.2" width="9.3" height="3.3" fill="#cbbb1c"/>
<rect x="1559.4" y="414.3" width="9.1" height="3.3" fill="#cbbb1c"/>
<rect x="1533.4" y="443.7" width="5.2" height="4.6" fill="#cbbb1c"/>
<rect x="1514.3" y="459.2" width="9.3" height="3.3" fill="#cbbb1c"/>
<rect x="1526.1" y="464.6" width="6.5" height="3.3" fill="#cbbb1c"/>
<rect x="1558.4" y="377.5" width="10.2" height="3.3" fill="#cbbb1c"/>
<rect x="1526.0" y="469.9" width="11.5" height="3.3" fill="#cbbb1c"/>
<rect x="1542.4" y="452.8" width="6.4" height="3.3" fill="#cbbb1c"/>
<rect x="1560.0" y="363.8" width="6.8" height="3.3" fill="#cbbb1c"/>
<rect x="1568.8" y="405.4" width="11.6" height="3.3" fill="#cbbb1c"/>
<rect x="1572.8" y="372.8" width="8.0" height="3.3" fill="#cbbb1c"/>
<rect x="1571.1" y="417.9" width="10.6" height="3.3" fill="#cbbb1c"/>
<rect x="1572.3" y="448.5" width="13.3" height="3.3" fill="#cbbb1c"/>
<rect x="1590.3" y="390.3" width="17.0" height="3.3" fill="#cbbb1c"/>
<rect x="1587.7" y="450.0" width="7.2" height="3.3" fill="#cbbb1c"/>
<rect x="1571.7" y="441.3" width="13.1" height="3.3" fill="#cbbb1c"/>
<rect x="1578.1" y="458.8" width="8.1" height="3.3" fill="#cbbb1c"/>
<rect x="1584.4" y="369.4" width="8.6" height="3.3" fill="#cbbb1c"/>
<rect x="1578.3" y="382.9" width="8.3" height="3.3" fill="#cbbb1c"/>
<rect x="1573.6" y="431.4" width="7.8" height="3.3" fill="#cbbb1c"/>
<rect x="1575.4" y="360.1" width="10.5" height="3.3" fill="#cbbb1c"/>
<rect x="1588.6" y="374.0" width="10.7" height="3.3" fill="#cbbb1c"/>
<rect x="1588.3" y="425.7" width="11.1" height="3.3" fill="#cbbb1c"/>
<rect x="1584.2" y="392.2" width="10.7" height="3.3" fill="#cbbb1c"/>
<rect x="1577.4" y="460.8" width="14.9" height="3.3" fill="#cbbb1c"/>
<rect x="1581.6" y="387.8" width="7.8" height="3.3" fill="#cbbb1c"/>
<rect x="1593.8" y="451.1" width="16.4" height="3.3" fill="#cbbb1c"/>
<rect x="1569.7" y="417.9" width="8.9" height="3.3" fill="#cbbb1c"/>
<rect x="1515.5" y="448.4" width="10.2" height="3.3" fill="#cbbb1c"/>
<rect x="1530.0" y="420.3" width="13.9" height="3.3" fill="#cbbb1c"/>
<rect x="1525.1" y="423.0" width="10.6" height="3.3" fill="#cbbb1c"/>
<rect x="1520.0" y="445.7" width="11.0" height="3.3" fill="#cbbb1c"/>
<rect x="1524.2" y="439.2" width="9.5" height="3.3" fill="#cbbb1c"/>
<rect x="1526.1" y="461.2" width="10.4" height="3.3" fill="#cbbb1c"/>
<rect x="1535.7" y="419.4" width="15.2" height="3.3" fill="#cbbb1c"/>
<rect x="1508.1" y="416.3" width="10.2" height="3.3" fill="#cbbb1c"/>
<rect x="1542.8" y="473.9" width="7.5" height="4.6" fill="#cbbb1c"/>
<rect x="1526.7" y="471.0" width="8.7" height="4.6" fill="#cbbb1c"/>
<rect x="1526.5" y="465.4" width="11.3" height="3.3" fill="#cbbb1c"/>
<rect x="1539.0" y="478.5" width="7.7" height="4.6" fill="#cbbb1c"/>
<rect x="1534.2" y="477.4" width="7.4" height="4.6" fill="#cbbb1c"/>
<rect x="1542.2" y="476.2" width="7.9" height="4.6" fill="#cbbb1c"/>
<rect x="1524.6" y="473.0" width="12.8" height="3.3" fill="#cbbb1c"/>
<rect x="1527.3" y="463.9" width="6.5" height="3.3" fill="#cbbb1c"/>
<rect x="1521.4" y="490.3" width="8.7" height="3.3" fill="#cbbb1c"/>
<rect x="1541.1" y="466.8" width="10.2" height="4.6" fill="#cbbb1c"/>
<rect x="1543.0" y="472.5" width="9.7" height="4.6" fill="#cbbb1c"/>
<rect x="1530.3" y="481.2" width="10.6" height="4.6" fill="#cbbb1c"/>
<rect x="1530.0" y="463.6" width="6.2" height="3.3" fill="#cbbb1c"/>
<rect x="1525.8" y="469.2" width="8.9" height="4.6" fill="#cbbb1c"/>
<rect x="1542.2" y="478.3" width="8.8" height="4.6" fill="#cbbb1c"/>
<rect x="1551.1" y="484.4" width="9.0" height="4.6" fill="#cbbb1c"/>
<rect x="1507.9" y="349.2" width="6.2" height="4.6" fill="#cbbb1c"/>
<rect x="1510.1" y="349.6" width="10.5" height="4.6" fill="#cbbb1c"/>
<rect x="1517.0" y="350.5" width="7.2" height="4.6" fill="#cbbb1c"/>
<rect x="1523.8" y="345.0" width="8.1" height="4.6" fill="#cbbb1c"/>
<rect x="1526.6" y="349.9" width="7.8" height="4.6" fill="#cbbb1c"/>
<rect x="1532.3" y="346.9" width="6.7" height="4.6" fill="#cbbb1c"/>
<rect x="1537.1" y="348.3" width="9.2" height="4.6" fill="#cbbb1c"/>
<rect x="1542.9" y="346.9" width="9.7" height="4.6" fill="#cbbb1c"/>
<rect x="1549.5" y="345.5" width="7.5" height="4.6" fill="#cbbb1c"/>
<rect x="1551.3" y="347.6" width="8.5" height="4.6" fill="#cbbb1c"/>
<rect x="1404.6" y="521.5" width="7.2" height="3.3" fill="#cbbb1c"/>
<rect x="1465.9" y="511.6" width="11.0" height="3.3" fill="#cbbb1c"/>
<rect x="1530.3" y="483.2" width="6.6" height="3.3" fill="#cbbb1c"/>
<rect x="1468.0" y="512.1" width="5.1" height="3.3" fill="#cbbb1c"/>
<rect x="1426.2" y="522.2" width="9.3" height="3.3" fill="#cbbb1c"/>
<rect x="1489.2" y="502.5" width="12.3" height="3.3" fill="#cbbb1c"/>
<rect x="1451.0" y="514.5" width="8.8" height="3.3" fill="#cbbb1c"/>
<rect x="1409.5" y="524.7" width="9.0" height="3.3" fill="#cbbb1c"/>
<rect x="1505.8" y="499.2" width="11.5" height="3.3" fill="#cbbb1c"/>
<rect x="1429.2" y="522.6" width="11.0" height="4.8" fill="#cbbb1c"/>
<rect x="1499.5" y="496.2" width="12.9" height="3.3" fill="#cbbb1c"/>
<rect x="1399.2" y="532.9" width="11.1" height="3.3" fill="#cbbb1c"/>
<rect x="1425.4" y="522.2" width="12.0" height="3.3" fill="#cbbb1c"/>
<rect x="1449.8" y="517.7" width="8.5" height="4.8" fill="#cbbb1c"/>
<rect x="1504.4" y="492.8" width="5.1" height="3.3" fill="#cbbb1c"/>
<rect x="1384.4" y="533.2" width="10.3" height="3.3" fill="#cbbb1c"/>
<rect x="1479.7" y="501.8" width="7.6" height="3.3" fill="#cbbb1c"/>
<rect x="1385.5" y="531.7" width="10.3" height="3.3" fill="#cbbb1c"/>
<rect x="1414.7" y="530.3" width="9.6" height="3.3" fill="#cbbb1c"/>
<rect x="1427.7" y="526.6" width="11.4" height="3.3" fill="#cbbb1c"/>
<rect x="1431.9" y="523.5" width="10.8" height="3.3" fill="#cbbb1c"/>
<rect x="1358.6" y="543.9" width="11.6" height="3.3" fill="#cbbb1c"/>
<rect x="1415.6" y="523.4" width="6.6" height="3.3" fill="#cbbb1c"/>
<rect x="1498.8" y="502.8" width="9.3" height="3.3" fill="#cbbb1c"/>
<rect x="1378.8" y="533.1" width="7.3" height="3.3" fill="#cbbb1c"/>
<rect x="1388.4" y="524.0" width="5.5" height="3.3" fill="#cbbb1c"/>
<rect x="1452.9" y="521.0" width="11.4" height="3.3" fill="#cbbb1c"/>
<rect x="1457.8" y="513.9" width="7.4" height="3.3" fill="#cbbb1c"/>
<rect x="1409.5" y="527.2" width="7.5" height="3.3" fill="#cbbb1c"/>
<rect x="1468.6" y="512.8" width="6.2" height="4.8" fill="#cbbb1c"/>
<rect x="1391.3" y="531.0" width="9.2" height="4.8" fill="#cbbb1c"/>
<rect x="1421.1" y="530.9" width="7.7" height="3.3" fill="#cbbb1c"/>
<rect x="1473.7" y="504.9" width="10.8" height="3.3" fill="#cbbb1c"/>
<rect x="1422.3" y="524.3" width="11.6" height="3.3" fill="#cbbb1c"/>
<rect x="1508.4" y="498.7" width="12.1" height="3.3" fill="#cbbb1c"/>
<rect x="1444.8" y="512.0" width="10.7" height="3.3" fill="#cbbb1c"/>
<rect x="1424.7" y="521.1" width="10.9" height="4.8" fill="#cbbb1c"/>
<rect x="1477.6" y="508.8" width="7.6" height="4.8" fill="#cbbb1c"/>
<rect x="1428.1" y="521.0" width="5.5" height="3.3" fill="#cbbb1c"/>
<rect x="1486.8" y="514.6" width="7.4" height="3.3" fill="#cbbb1c"/>
<rect x="1495.0" y="502.0" width="8.7" height="4.8" fill="#cbbb1c"/>
<rect x="1522.7" y="493.1" width="5.3" height="3.3" fill="#cbbb1c"/>
<rect x="1381.6" y="528.3" width="9.8" height="4.8" fill="#cbbb1c"/>
<rect x="1460.6" y="518.0" width="6.8" height="3.3" fill="#cbbb1c"/>
<rect x="1516.2" y="485.9" width="12.5" height="4.8" fill="#cbbb1c"/>
<rect x="1510.0" y="500.2" width="8.9" height="4.8" fill="#cbbb1c"/>
<rect x="1520.0" y="488.3" width="12.7" height="4.8" fill="#cbbb1c"/>
<rect x="1512.1" y="499.5" width="8.2" height="3.3" fill="#cbbb1c"/>
<rect x="1528.2" y="489.9" width="9.2" height="3.3" fill="#cbbb1c"/>
<rect x="1498.9" y="498.0" width="5.5" height="3.3" fill="#cbbb1c"/>
<rect x="1517.7" y="498.8" width="8.6" height="3.3" fill="#cbbb1c"/>
<rect x="1482.2" y="501.1" width="9.8" height="3.3" fill="#cbbb1c"/>
<rect x="1422.9" y="524.2" width="12.3" height="3.3" fill="#cbbb1c"/>
<rect x="1465.7" y="509.7" width="12.9" height="3.3" fill="#cbbb1c"/>
<rect x="1445.4" y="523.2" width="6.4" height="3.3" fill="#cbbb1c"/>
<rect x="1502.3" y="500.4" width="11.8" height="3.3" fill="#cbbb1c"/>
<rect x="1361.2" y="533.2" width="5.8" height="4.8" fill="#cbbb1c"/>
<rect x="1480.4" y="513.6" width="5.7" height="3.3" fill="#cbbb1c"/>
<rect x="1346.5" y="535.4" width="10.5" height="4.8" fill="#cbbb1c"/>
<rect x="1384.0" y="533.2" width="9.3" height="4.8" fill="#cbbb1c"/>
<rect x="1375.0" y="534.7" width="7.5" height="3.3" fill="#cbbb1c"/>
<rect x="1450.0" y="513.8" width="13.0" height="3.3" fill="#cbbb1c"/>
<rect x="1414.1" y="525.0" width="8.2" height="4.8" fill="#cbbb1c"/>
<rect x="1488.0" y="502.7" width="11.3" height="3.3" fill="#cbbb1c"/>
<rect x="1470.2" y="514.1" width="10.7" height="3.3" fill="#cbbb1c"/>
<rect x="1402.3" y="529.3" width="5.9" height="3.3" fill="#cbbb1c"/>
<rect x="1508.8" y="499.4" width="12.2" height="3.3" fill="#cbbb1c"/>
<rect x="1400.6" y="524.4" width="8.0" height="3.3" fill="#cbbb1c"/>
<rect x="1531.2" y="488.4" width="5.7" height="3.3" fill="#cbbb1c"/>
<rect x="1381.6" y="527.5" width="10.9" height="3.3" fill="#cbbb1c"/>
<rect x="1403.3" y="527.0" width="10.1" height="4.8" fill="#cbbb1c"/>
<rect x="1506.4" y="502.4" width="5.7" height="3.3" fill="#cbbb1c"/>
<rect x="1466.0" y="516.1" width="6.4" height="3.3" fill="#cbbb1c"/>
<rect x="1420.6" y="528.2" width="11.7" height="3.3" fill="#cbbb1c"/>
<rect x="1363.3" y="544.8" width="8.5" height="3.3" fill="#cbbb1c"/>
<rect x="1408.8" y="529.3" width="11.6" height="3.3" fill="#cbbb1c"/>
<rect x="1470.2" y="511.7" width="8.1" height="3.3" fill="#cbbb1c"/>
<rect x="1522.7" y="483.6" width="10.0" height="4.8" fill="#cbbb1c"/>
<rect x="1464.1" y="510.5" width="7.0" height="3.3" fill="#cbbb1c"/>
<rect x="1395.6" y="535.9" width="6.5" height="3.3" fill="#cbbb1c"/>
<rect x="1470.4" y="513.5" width="9.1" height="3.3" fill="#cbbb1c"/>
<rect x="1504.0" y="500.7" width="9.9" height="3.3" fill="#cbbb1c"/>
<rect x="1394.1" y="527.4" width="6.9" height="3.3" fill="#cbbb1c"/>
<rect x="1456.7" y="514.8" width="6.6" height="3.3" fill="#cbbb1c"/>
<rect x="1453.0" y="521.1" width="11.2" height="3.3" fill="#cbbb1c"/>
<rect x="1390.9" y="531.6" width="9.6" height="3.3" fill="#cbbb1c"/>
<rect x="1407.8" y="530.7" width="8.7" height="3.3" fill="#cbbb1c"/>
<rect x="1430.8" y="520.6" width="10.8" height="3.3" fill="#cbbb1c"/>
<rect x="1136.0" y="196.0" width="18.0" height="3.0" fill="#cbbb1c"/>
<rect x="1138.0" y="203.0" width="10.0" height="3.0" fill="#cbbb1c"/>
<rect x="1137.0" y="209.0" width="14.0" height="3.0" fill="#cbbb1c"/>
<rect x="1136.0" y="216.0" width="22.0" height="3.0" fill="#cbbb1c"/>
<rect x="1145.0" y="221.0" width="16.0" height="3.0" fill="#cbbb1c"/>
<rect x="1136.0" y="225.0" width="12.0" height="3.0" fill="#cbbb1c"/>
<rect x="1150.0" y="226.0" width="12.0" height="3.0" fill="#cbbb1c"/>
<rect x="1136.0" y="235.0" width="8.0" height="3.0" fill="#cbbb1c"/>
<rect x="1148.0" y="233.0" width="10.0" height="3.0" fill="#cbbb1c"/>
<rect x="1160.0" y="233.0" width="9.0" height="3.0" fill="#cbbb1c"/>
<rect x="1136.0" y="241.0" width="26.0" height="3.0" fill="#cbbb1c"/>
<rect x="1150.0" y="241.0" width="14.0" height="3.0" fill="#cbbb1c"/>
<rect x="1136.0" y="248.0" width="12.0" height="3.0" fill="#cbbb1c"/>
<rect x="1136.0" y="254.0" width="11.0" height="3.0" fill="#cbbb1c"/>
<rect x="1135.0" y="549.0" width="9.0" height="3.4" fill="#cbbb1c"/>
<rect x="1135.0" y="554.0" width="12.0" height="3.4" fill="#cbbb1c"/>
<rect x="1136.0" y="558.0" width="10.0" height="3.4" fill="#cbbb1c"/>
<rect x="1135.0" y="688.0" width="10.0" height="3.4" fill="#cbbb1c"/>
<rect x="1136.0" y="692.0" width="12.0" height="3.4" fill="#cbbb1c"/>
<rect x="1135.0" y="696.0" width="9.0" height="3.4" fill="#cbbb1c"/>
</g>
<line x1="1131.4" y1="192.3" x2="1131.4" y2="715.7" stroke="#e01010" stroke-width="2.2"/>
<line x1="1130.8" y1="715.7" x2="1854.7" y2="715.7" stroke="#00007c" stroke-width="2"/>
<line x1="1130.8" y1="715.7" x2="1130.8" y2="710.7" stroke="#111" stroke-width="1" opacity="0.5"/>
<line x1="1203.2" y1="715.7" x2="1203.2" y2="710.7" stroke="#111" stroke-width="1" opacity="0.5"/>
<line x1="1275.6" y1="715.7" x2="1275.6" y2="710.7" stroke="#111" stroke-width="1" opacity="0.5"/>
<line x1="1348.0" y1="715.7" x2="1348.0" y2="710.7" stroke="#111" stroke-width="1" opacity="0.5"/>
<line x1="1420.4" y1="715.7" x2="1420.4" y2="710.7" stroke="#111" stroke-width="1" opacity="0.5"/>
<line x1="1492.8" y1="715.7" x2="1492.8" y2="710.7" stroke="#111" stroke-width="1" opacity="0.5"/>
<line x1="1565.1" y1="715.7" x2="1565.1" y2="710.7" stroke="#111" stroke-width="1" opacity="0.5"/>
<line x1="1637.5" y1="715.7" x2="1637.5" y2="710.7" stroke="#111" stroke-width="1" opacity="0.5"/>
<line x1="1709.9" y1="715.7" x2="1709.9" y2="710.7" stroke="#111" stroke-width="1" opacity="0.5"/>
<line x1="1782.3" y1="715.7" x2="1782.3" y2="710.7" stroke="#111" stroke-width="1" opacity="0.5"/>
<line x1="1854.7" y1="715.7" x2="1854.7" y2="710.7" stroke="#111" stroke-width="1" opacity="0.5"/>
<text x="1122.0" y="196.8" font-size="13.00" text-anchor="end" fill="#333">0.00</text>
<text x="1122.0" y="249.1" font-size="13.00" text-anchor="end" fill="#333">0.26</text>
<text x="1122.0" y="301.5" font-size="13.00" text-anchor="end" fill="#333">0.53</text>
<text x="1122.0" y="353.8" font-size="13.00" text-anchor="end" fill="#333">0.79</text>
<text x="1122.0" y="406.2" font-size="13.00" text-anchor="end" fill="#333">1.05</text>
<text x="1122.0" y="458.5" font-size="13.00" text-anchor="end" fill="#333">1.31</text>
<text x="1122.0" y="510.8" font-size="13.00" text-anchor="end" fill="#333">1.58</text>
<text x="1122.0" y="563.2" font-size="13.00" text-anchor="end" fill="#333">1.84</text>
<text x="1122.0" y="615.5" font-size="13.00" text-anchor="end" fill="#333">2.10</text>
<text x="1122.0" y="667.9" font-size="13.00" text-anchor="end" fill="#333">2.36</text>
<text x="1122.0" y="720.2" font-size="13.00" text-anchor="end" fill="#333">2.63</text>
<text x="1130.8" y="736.0" font-size="13.40" text-anchor="middle" fill="#333">0</text>
<text x="1203.2" y="736.0" font-size="13.40" text-anchor="middle" fill="#333">100</text>
<text x="1275.6" y="736.0" font-size="13.40" text-anchor="middle" fill="#333">200</text>
<text x="1348.0" y="736.0" font-size="13.40" text-anchor="middle" fill="#333">300</text>
<text x="1420.4" y="736.0" font-size="13.40" text-anchor="middle" fill="#333">400</text>
<text x="1492.8" y="736.0" font-size="13.40" text-anchor="middle" fill="#333">500</text>
<text x="1565.1" y="736.0" font-size="13.40" text-anchor="middle" fill="#333">600</text>
<text x="1637.5" y="736.0" font-size="13.40" text-anchor="middle" fill="#333">700</text>
<text x="1709.9" y="736.0" font-size="13.40" text-anchor="middle" fill="#333">800</text>
<text x="1782.3" y="736.0" font-size="13.40" text-anchor="middle" fill="#333">900</text>
<text x="1854.7" y="736.0" font-size="13.40" text-anchor="middle" fill="#333">1000</text>
<text x="1491.0" y="766.0" font-size="22.60" text-anchor="middle" fill="#1a1a1a" textLength="132.4" lengthAdjust="spacingAndGlyphs">Current (A)</text>
<text x="1074.5" y="454.0" font-size="22.60" text-anchor="middle" fill="#1a1a1a" transform="rotate(-90 1074.5 454.0)" textLength="216" lengthAdjust="spacingAndGlyphs">Bunch Length (ps)</text>
<path d="M141.1 810.3 L148.6 803.8 L156.1 810.3 L156.1 822.8 L141.1 822.8 Z" stroke="#b09a6a" stroke-width="0.8" fill="#ead79c"/>
<line x1="146.0" y1="812.8" x2="146.0" y2="822.8" stroke="#c9a85c" stroke-width="1.2"/>
<line x1="151.2" y1="812.8" x2="151.2" y2="822.8" stroke="#c9a85c" stroke-width="1.2"/>
<path d="M135.6 811.3 L148.6 798.3 L161.6 811.3 L158.6 814.4 L148.6 804.5999999999999 L138.6 814.4 Z" stroke="#5e1f3c" stroke-width="0.6" fill="#8a2d50"/>
<circle cx="186.1" cy="810.8" r="11.6" fill="#14869c" stroke="#0f6f86" stroke-width="1.4"/>
<circle cx="186.1" cy="810.3" r="8.2" fill="#3fb4dc" opacity="0.85"/>
<path d="M182.1 805.3 L191.6 810.8 L182.1 816.3 Z" stroke="none" stroke-width="1" fill="#d8f2fb"/>
<circle cx="226.1" cy="810.8" r="11.6" fill="#14869c" stroke="#0f6f86" stroke-width="1.4"/>
<circle cx="226.1" cy="810.3" r="8.2" fill="#3fb4dc" opacity="0.85"/>
<path d="M225.1 805.8 L231.6 810.8 L225.1 815.8 Z M220.6 808.8 h5 v4 h-5 z" stroke="none" stroke-width="1" fill="#d8f2fb"/>
<line x1="249.6" y1="798.8" x2="249.6" y2="822.8" stroke="#dadada" stroke-width="1.4"/>
<line x1="263.1" y1="810.8" x2="281.1" y2="810.8" stroke="#1c4474" stroke-width="3.6"/>
<line x1="272.1" y1="801.8" x2="272.1" y2="819.8" stroke="#1c4474" stroke-width="3.6"/>
<path d="M284.6 810.8 L279.6 815.4 L279.6 806.1999999999999 Z" stroke="none" stroke-width="1" fill="#1c4474"/>
<path d="M259.6 810.8 L264.6 806.1999999999999 L264.6 815.4 Z" stroke="none" stroke-width="1" fill="#1c4474"/>
<path d="M272.1 823.3 L267.5 818.3 L276.70000000000005 818.3 Z" stroke="none" stroke-width="1" fill="#1c4474"/>
<path d="M272.1 798.3 L276.70000000000005 803.3 L267.5 803.3 Z" stroke="none" stroke-width="1" fill="#1c4474"/>
<rect x="309.6" y="807.8" width="12.0" height="14.0" fill="#f1f3f5" opacity="0.9"/>
<circle cx="308.6" cy="812.8" r="6" fill="#bcd6e8" opacity="0.85"/>
<path d="M317.6 803.8 L322.6 798.8" stroke="#e6cf9c" stroke-width="3.2" fill="none"/>
<line x1="336.6" y1="798.8" x2="336.6" y2="822.8" stroke="#d4d4d4" stroke-width="1.2"/>
<line x1="347.1" y1="799.8" x2="371.1" y2="799.8" stroke="#8d9a92" stroke-width="1.6"/>
<line x1="347.1" y1="803.3" x2="371.1" y2="803.3" stroke="#8d9a92" stroke-width="1.6"/>
<line x1="347.1" y1="818.3" x2="371.1" y2="818.3" stroke="#8d9a92" stroke-width="1.6"/>
<line x1="347.1" y1="821.8" x2="371.1" y2="821.8" stroke="#8d9a92" stroke-width="1.6"/>
<rect x="350.1" y="801.8" width="18" height="18" fill="#dfe8e2" stroke="#5f8474" stroke-width="2.2"/>
<rect x="354.6" y="805.8" width="9" height="9" fill="#f6f8f6" stroke="#7fa090" stroke-width="1.2"/>
<rect x="384.6" y="797.8" width="26.5" height="27.5" rx="2.5" fill="#1e4d7d" stroke="#163c64" stroke-width="1"/>
<rect x="389.1" y="799.8" width="17.0" height="8.5" fill="#5a8cbc"/>
<rect x="389.1" y="804.8" width="17.0" height="2.0" fill="#7ea8cf"/>
<rect x="389.6" y="813.8" width="16.0" height="11.0" fill="#173e68"/>
<rect x="392.1" y="815.8" width="5.0" height="8.0" fill="#9fc0dc"/>
<rect x="430.1" y="805.8" width="13.0" height="14.0" fill="#f6f6f6" opacity="0.9"/>
<path d="M428.1 811.8 L433.6 818.3 L446.6 801.3" stroke="#22c04c" stroke-width="4.4" fill="none" stroke-linejoin="round" stroke-linecap="round"/>
<path d="M1050.5 810.0 L1058 803.5 L1065.5 810.0 L1065.5 822.5 L1050.5 822.5 Z" stroke="#b09a6a" stroke-width="0.8" fill="#ead79c"/>
<line x1="1055.4" y1="812.5" x2="1055.4" y2="822.5" stroke="#c9a85c" stroke-width="1.2"/>
<line x1="1060.6" y1="812.5" x2="1060.6" y2="822.5" stroke="#c9a85c" stroke-width="1.2"/>
<path d="M1045 811.0 L1058 798.0 L1071 811.0 L1068 814.1 L1058 804.3 L1048 814.1 Z" stroke="#5e1f3c" stroke-width="0.6" fill="#8a2d50"/>
<circle cx="1095.5" cy="810.5" r="11.6" fill="#14869c" stroke="#0f6f86" stroke-width="1.4"/>
<circle cx="1095.5" cy="810.0" r="8.2" fill="#3fb4dc" opacity="0.85"/>
<path d="M1091.5 805.0 L1101.0 810.5 L1091.5 816.0 Z" stroke="none" stroke-width="1" fill="#d8f2fb"/>
<circle cx="1135.5" cy="810.5" r="11.6" fill="#14869c" stroke="#0f6f86" stroke-width="1.4"/>
<circle cx="1135.5" cy="810.0" r="8.2" fill="#3fb4dc" opacity="0.85"/>
<path d="M1134.5 805.5 L1141.0 810.5 L1134.5 815.5 Z M1130.0 808.5 h5 v4 h-5 z" stroke="none" stroke-width="1" fill="#d8f2fb"/>
<line x1="1159.0" y1="798.5" x2="1159.0" y2="822.5" stroke="#dadada" stroke-width="1.4"/>
<line x1="1172.5" y1="810.5" x2="1190.5" y2="810.5" stroke="#1c4474" stroke-width="3.6"/>
<line x1="1181.5" y1="801.5" x2="1181.5" y2="819.5" stroke="#1c4474" stroke-width="3.6"/>
<path d="M1194.0 810.5 L1189.0 815.1 L1189.0 805.9 Z" stroke="none" stroke-width="1" fill="#1c4474"/>
<path d="M1169.0 810.5 L1174.0 805.9 L1174.0 815.1 Z" stroke="none" stroke-width="1" fill="#1c4474"/>
<path d="M1181.5 823.0 L1176.9 818.0 L1186.1 818.0 Z" stroke="none" stroke-width="1" fill="#1c4474"/>
<path d="M1181.5 798.0 L1186.1 803.0 L1176.9 803.0 Z" stroke="none" stroke-width="1" fill="#1c4474"/>
<rect x="1219.0" y="807.5" width="12.0" height="14.0" fill="#f1f3f5" opacity="0.9"/>
<circle cx="1218.0" cy="812.5" r="6" fill="#bcd6e8" opacity="0.85"/>
<path d="M1227 803.5 L1232 798.5" stroke="#e6cf9c" stroke-width="3.2" fill="none"/>
<line x1="1246.0" y1="798.5" x2="1246.0" y2="822.5" stroke="#d4d4d4" stroke-width="1.2"/>
<line x1="1256.5" y1="799.5" x2="1280.5" y2="799.5" stroke="#8d9a92" stroke-width="1.6"/>
<line x1="1256.5" y1="803.0" x2="1280.5" y2="803.0" stroke="#8d9a92" stroke-width="1.6"/>
<line x1="1256.5" y1="818.0" x2="1280.5" y2="818.0" stroke="#8d9a92" stroke-width="1.6"/>
<line x1="1256.5" y1="821.5" x2="1280.5" y2="821.5" stroke="#8d9a92" stroke-width="1.6"/>
<rect x="1259.5" y="801.5" width="18" height="18" fill="#dfe8e2" stroke="#5f8474" stroke-width="2.2"/>
<rect x="1264.0" y="805.5" width="9" height="9" fill="#f6f8f6" stroke="#7fa090" stroke-width="1.2"/>
<rect x="1294" y="797.5" width="26.5" height="27.5" rx="2.5" fill="#1e4d7d" stroke="#163c64" stroke-width="1"/>
<rect x="1298.5" y="799.5" width="17.0" height="8.5" fill="#5a8cbc"/>
<rect x="1298.5" y="804.5" width="17.0" height="2.0" fill="#7ea8cf"/>
<rect x="1299.0" y="813.5" width="16.0" height="11.0" fill="#173e68"/>
<rect x="1301.5" y="815.5" width="5.0" height="8.0" fill="#9fc0dc"/>
<rect x="1339.5" y="805.5" width="13.0" height="14.0" fill="#f6f6f6" opacity="0.9"/>
<path d="M1337.5 811.5 L1343.0 818.0 L1356.0 801.0" stroke="#22c04c" stroke-width="4.4" fill="none" stroke-linejoin="round" stroke-linecap="round"/>
<text x="311.8" y="892.0" font-size="23.25" text-anchor="middle" fill="#2e2e2e" textLength="50.4" lengthAdjust="spacingAndGlyphs" stroke="#2e2e2e" stroke-width="0.3">TDS</text>
<text x="436.0" y="892.8" font-size="32.24" fill="#333" stroke="#333" stroke-width="0.3">TDS03</text>
<path d="M651.8 879.4 L656.0 883.6 L660.2 879.4" stroke="#555" stroke-width="1.7" fill="none"/>
<text x="702.0" y="893.0" font-size="29.31" fill="#444" stroke="#444" stroke-width="0.3">Calibration</text>
<text x="235.0" y="984.0" font-size="24.60" fill="#2e2e2e" textLength="151.7" lengthAdjust="spacingAndGlyphs" stroke="#2e2e2e" stroke-width="0.3">Scan Phase</text>
<text x="522.0" y="984.5" font-size="25.48" text-anchor="middle" fill="#444" textLength="44.8" lengthAdjust="spacingAndGlyphs" stroke="#444" stroke-width="0.3">-13</text>
<path d="M620.8 957.6 L625.0 953.4 L629.2 957.6" stroke="#555" stroke-width="1.7" fill="none"/>
<path d="M620.8 991.4 L625.0 995.6 L629.2 991.4" stroke="#555" stroke-width="1.7" fill="none"/>
<text x="646.0" y="984.0" font-size="22.23" fill="#2e2e2e" textLength="24.0" lengthAdjust="spacingAndGlyphs" stroke="#2e2e2e" stroke-width="0.3">to</text>
<text x="771.5" y="984.5" font-size="25.48" text-anchor="middle" fill="#444" textLength="44.8" lengthAdjust="spacingAndGlyphs" stroke="#444" stroke-width="0.3">-11</text>
<path d="M872.3 957.6 L876.5 953.4 L880.7 957.6" stroke="#555" stroke-width="1.7" fill="none"/>
<path d="M872.3 991.4 L876.5 995.6 L880.7 991.4" stroke="#555" stroke-width="1.7" fill="none"/>
<text x="240.6" y="1075.5" font-size="24.67" fill="#2e2e2e" textLength="142.2" lengthAdjust="spacingAndGlyphs" stroke="#2e2e2e" stroke-width="0.3">Coefficient</text>
<text x="477.6" y="1078.5" font-size="34.70" fill="#2e2e2e" stroke="#2e2e2e" stroke-width="0.3">190.40</text>
<text x="677.0" y="1074.0" font-size="28.86" fill="#2e2e2e" stroke="#2e2e2e" stroke-width="0.3">pixel/ps</text>
<text x="756.2" y="1358.4" font-size="23.03" fill="#333" textLength="147.4" lengthAdjust="spacingAndGlyphs" stroke="#333" stroke-width="0.3">Write to File</text>
<text x="1055.6" y="873.5" font-size="24.56" fill="#2e2e2e" textLength="186.0" lengthAdjust="spacingAndGlyphs" stroke="#2e2e2e" stroke-width="0.3">Bunch Charge</text>
<text x="1358.5" y="874.8" font-size="31.50" text-anchor="middle" fill="#333" stroke="#333" stroke-width="0.3">500</text>
<path d="M1458.3 857.6 L1462.5 853.4 L1466.7 857.6" stroke="#555" stroke-width="1.7" fill="none"/>
<path d="M1458.3 872.4 L1462.5 876.6 L1466.7 872.4" stroke="#555" stroke-width="1.7" fill="none"/>
<text x="1483.0" y="873.5" font-size="23.51" fill="#2e2e2e" textLength="33.7" lengthAdjust="spacingAndGlyphs" stroke="#2e2e2e" stroke-width="0.3">pC</text>
<text x="1574.0" y="902.5" font-size="36.50" class="ls" text-anchor="middle" fill="#333" stroke="#333" stroke-width="0.3">Start</text>
<text x="1106.8" y="928.0" font-size="23.87" fill="#2e2e2e" textLength="81.6" lengthAdjust="spacingAndGlyphs" stroke="#2e2e2e" stroke-width="0.3">FWHM</text>
<text x="1360.0" y="929.3" font-size="31.50" text-anchor="middle" fill="#333" stroke="#333" stroke-width="0.3">0.98</text>
<text x="1483.0" y="928.0" font-size="23.34" fill="#2e2e2e" textLength="29.0" lengthAdjust="spacingAndGlyphs" stroke="#2e2e2e" stroke-width="0.3">ps</text>
<text x="1062.0" y="983.0" font-size="24.95" fill="#2e2e2e" textLength="173.0" lengthAdjust="spacingAndGlyphs" stroke="#2e2e2e" stroke-width="0.3">Peak Current</text>
<text x="1358.5" y="984.8" font-size="31.50" text-anchor="middle" fill="#333" stroke="#333" stroke-width="0.3">656</text>
<text x="1483.0" y="983.0" font-size="25.58" fill="#2e2e2e" stroke="#2e2e2e" stroke-width="0.3">A</text>
<rect x="1086.2" y="1184.4" width="826.8" height="149.6" fill="#fff"/>
<line x1="1251.6" y1="1184.4" x2="1251.6" y2="1334.0" stroke="#ff0000" stroke-width="1.0" stroke-dasharray="1.8 4.6" opacity="0.45"/>
<line x1="1416.9" y1="1184.4" x2="1416.9" y2="1334.0" stroke="#ff0000" stroke-width="1.0" stroke-dasharray="1.8 4.6" opacity="0.45"/>
<line x1="1582.3" y1="1184.4" x2="1582.3" y2="1334.0" stroke="#ff0000" stroke-width="1.0" stroke-dasharray="1.8 4.6" opacity="0.45"/>
<line x1="1747.6" y1="1184.4" x2="1747.6" y2="1334.0" stroke="#ff0000" stroke-width="1.0" stroke-dasharray="1.8 4.6" opacity="0.45"/>
<line x1="1086.2" y1="1217.4" x2="1913.0" y2="1217.4" stroke="#ff0000" stroke-width="1.0" stroke-dasharray="1.8 4.6" opacity="0.45"/>
<line x1="1086.2" y1="1258.4" x2="1913.0" y2="1258.4" stroke="#ff0000" stroke-width="1.0" stroke-dasharray="1.8 4.6" opacity="0.45"/>
<line x1="1086.2" y1="1299.6" x2="1913.0" y2="1299.6" stroke="#ff0000" stroke-width="1.0" stroke-dasharray="1.8 4.6" opacity="0.45"/>
<clipPath id="c3"><rect x="1085.4" y="1183.6" width="828.4" height="151.2"/></clipPath><g clip-path="url(#c3)">
<path d="M1086.2 1250.4 L1119.3 1267.9 L1152.3 1328.9 L1185.4 1224.0 L1218.5 1236.8 L1251.6 1250.4 L1284.6 1210.4 L1317.7 1218.6 L1350.8 1196.8 L1383.8 1228.3 L1416.9 1232.2 L1450.0 1232.2 L1483.1 1219.0 L1516.1 1223.6 L1549.2 1210.4 L1582.3 1281.1 L1615.4 1206.5 L1648.4 1184.4 L1681.5 1258.6 L1714.6 1219.0 L1747.6 1236.8 L1780.7 1240.7 L1813.8 1219.0 L1846.9 1236.8" stroke="#e01818" stroke-width="1.7" fill="none"/>
<circle cx="1086.2" cy="1250.4" r="5.6" fill="#d01010" stroke="#7a0a0a" stroke-width="0.8"/>
<circle cx="1119.3" cy="1267.9" r="5.6" fill="#d01010" stroke="#7a0a0a" stroke-width="0.8"/>
<circle cx="1152.3" cy="1328.9" r="5.6" fill="#d01010" stroke="#7a0a0a" stroke-width="0.8"/>
<circle cx="1185.4" cy="1224.0" r="5.6" fill="#d01010" stroke="#7a0a0a" stroke-width="0.8"/>
<circle cx="1218.5" cy="1236.8" r="5.6" fill="#d01010" stroke="#7a0a0a" stroke-width="0.8"/>
<circle cx="1251.6" cy="1250.4" r="5.6" fill="#d01010" stroke="#7a0a0a" stroke-width="0.8"/>
<circle cx="1284.6" cy="1210.4" r="5.6" fill="#d01010" stroke="#7a0a0a" stroke-width="0.8"/>
<circle cx="1317.7" cy="1218.6" r="5.6" fill="#d01010" stroke="#7a0a0a" stroke-width="0.8"/>
<circle cx="1350.8" cy="1196.8" r="5.6" fill="#d01010" stroke="#7a0a0a" stroke-width="0.8"/>
<circle cx="1383.8" cy="1228.3" r="5.6" fill="#d01010" stroke="#7a0a0a" stroke-width="0.8"/>
<circle cx="1416.9" cy="1232.2" r="5.6" fill="#d01010" stroke="#7a0a0a" stroke-width="0.8"/>
<circle cx="1450.0" cy="1232.2" r="5.6" fill="#d01010" stroke="#7a0a0a" stroke-width="0.8"/>
<circle cx="1483.1" cy="1219.0" r="5.6" fill="#d01010" stroke="#7a0a0a" stroke-width="0.8"/>
<circle cx="1516.1" cy="1223.6" r="5.6" fill="#d01010" stroke="#7a0a0a" stroke-width="0.8"/>
<circle cx="1549.2" cy="1210.4" r="5.6" fill="#d01010" stroke="#7a0a0a" stroke-width="0.8"/>
<circle cx="1582.3" cy="1281.1" r="5.6" fill="#d01010" stroke="#7a0a0a" stroke-width="0.8"/>
<circle cx="1615.4" cy="1206.5" r="5.6" fill="#d01010" stroke="#7a0a0a" stroke-width="0.8"/>
<circle cx="1648.4" cy="1184.4" r="5.6" fill="#d01010" stroke="#7a0a0a" stroke-width="0.8"/>
<circle cx="1681.5" cy="1258.6" r="5.6" fill="#d01010" stroke="#7a0a0a" stroke-width="0.8"/>
<circle cx="1714.6" cy="1219.0" r="5.6" fill="#d01010" stroke="#7a0a0a" stroke-width="0.8"/>
<circle cx="1747.6" cy="1236.8" r="5.6" fill="#d01010" stroke="#7a0a0a" stroke-width="0.8"/>
<circle cx="1780.7" cy="1240.7" r="5.6" fill="#d01010" stroke="#7a0a0a" stroke-width="0.8"/>
<circle cx="1813.8" cy="1219.0" r="5.6" fill="#d01010" stroke="#7a0a0a" stroke-width="0.8"/>
<circle cx="1846.9" cy="1236.8" r="5.6" fill="#d01010" stroke="#7a0a0a" stroke-width="0.8"/>
</g>
<line x1="1086.2" y1="1334.0" x2="1086.2" y2="1327.0" stroke="#222" stroke-width="1.2"/>
<line x1="1086.2" y1="1184.4" x2="1086.2" y2="1191.4" stroke="#222" stroke-width="1.2"/>
<line x1="1251.6" y1="1334.0" x2="1251.6" y2="1327.0" stroke="#222" stroke-width="1.2"/>
<line x1="1251.6" y1="1184.4" x2="1251.6" y2="1191.4" stroke="#222" stroke-width="1.2"/>
<line x1="1416.9" y1="1334.0" x2="1416.9" y2="1327.0" stroke="#222" stroke-width="1.2"/>
<line x1="1416.9" y1="1184.4" x2="1416.9" y2="1191.4" stroke="#222" stroke-width="1.2"/>
<line x1="1582.3" y1="1334.0" x2="1582.3" y2="1327.0" stroke="#222" stroke-width="1.2"/>
<line x1="1582.3" y1="1184.4" x2="1582.3" y2="1191.4" stroke="#222" stroke-width="1.2"/>
<line x1="1747.6" y1="1334.0" x2="1747.6" y2="1327.0" stroke="#222" stroke-width="1.2"/>
<line x1="1747.6" y1="1184.4" x2="1747.6" y2="1191.4" stroke="#222" stroke-width="1.2"/>
<line x1="1913.0" y1="1334.0" x2="1913.0" y2="1327.0" stroke="#222" stroke-width="1.2"/>
<line x1="1913.0" y1="1184.4" x2="1913.0" y2="1191.4" stroke="#222" stroke-width="1.2"/>
<line x1="1086.2" y1="1217.4" x2="1093.2" y2="1217.4" stroke="#222" stroke-width="1.2"/>
<line x1="1913.0" y1="1217.4" x2="1906.0" y2="1217.4" stroke="#222" stroke-width="1.2"/>
<line x1="1086.2" y1="1258.4" x2="1093.2" y2="1258.4" stroke="#222" stroke-width="1.2"/>
<line x1="1913.0" y1="1258.4" x2="1906.0" y2="1258.4" stroke="#222" stroke-width="1.2"/>
<line x1="1086.2" y1="1299.6" x2="1093.2" y2="1299.6" stroke="#222" stroke-width="1.2"/>
<line x1="1913.0" y1="1299.6" x2="1906.0" y2="1299.6" stroke="#222" stroke-width="1.2"/>
<rect x="1086.2" y="1184.4" width="826.8" height="149.6" fill="none" stroke="#222" stroke-width="1.6"/>
<text x="1077.5" y="1222.4" font-size="13.60" text-anchor="end" fill="#333">1.00</text>
<text x="1077.5" y="1263.4" font-size="13.60" text-anchor="end" fill="#333">0.95</text>
<text x="1077.5" y="1304.6" font-size="13.60" text-anchor="end" fill="#333">0.90</text>
<text x="1086.2" y="1354.8" font-size="13.60" text-anchor="middle" fill="#333">0</text>
<text x="1251.6" y="1354.8" font-size="13.60" text-anchor="middle" fill="#333">5</text>
<text x="1416.9" y="1354.8" font-size="13.60" text-anchor="middle" fill="#333">10</text>
<text x="1582.3" y="1354.8" font-size="13.60" text-anchor="middle" fill="#333">15</text>
<text x="1747.6" y="1354.8" font-size="13.60" text-anchor="middle" fill="#333">20</text>
<text x="1913.0" y="1354.8" font-size="13.60" text-anchor="middle" fill="#333">25</text>
<text x="1499.5" y="1176.0" font-size="18.80" text-anchor="middle" fill="#222">Bunch Length. Mean=0.98 ps Std=0.03 ps</text>
<rect x="1080.4" y="1417.5" width="832.6" height="152.1" fill="#fff"/>
<line x1="1246.9" y1="1417.5" x2="1246.9" y2="1569.6" stroke="#ff0000" stroke-width="1.0" stroke-dasharray="1.8 4.6" opacity="0.45"/>
<line x1="1413.4" y1="1417.5" x2="1413.4" y2="1569.6" stroke="#ff0000" stroke-width="1.0" stroke-dasharray="1.8 4.6" opacity="0.45"/>
<line x1="1580.0" y1="1417.5" x2="1580.0" y2="1569.6" stroke="#ff0000" stroke-width="1.0" stroke-dasharray="1.8 4.6" opacity="0.45"/>
<line x1="1746.5" y1="1417.5" x2="1746.5" y2="1569.6" stroke="#ff0000" stroke-width="1.0" stroke-dasharray="1.8 4.6" opacity="0.45"/>
<line x1="1080.4" y1="1439.2" x2="1913.0" y2="1439.2" stroke="#ff0000" stroke-width="1.0" stroke-dasharray="1.8 4.6" opacity="0.45"/>
<line x1="1080.4" y1="1461.0" x2="1913.0" y2="1461.0" stroke="#ff0000" stroke-width="1.0" stroke-dasharray="1.8 4.6" opacity="0.45"/>
<line x1="1080.4" y1="1482.7" x2="1913.0" y2="1482.7" stroke="#ff0000" stroke-width="1.0" stroke-dasharray="1.8 4.6" opacity="0.45"/>
<line x1="1080.4" y1="1504.4" x2="1913.0" y2="1504.4" stroke="#ff0000" stroke-width="1.0" stroke-dasharray="1.8 4.6" opacity="0.45"/>
<line x1="1080.4" y1="1526.1" x2="1913.0" y2="1526.1" stroke="#ff0000" stroke-width="1.0" stroke-dasharray="1.8 4.6" opacity="0.45"/>
<line x1="1080.4" y1="1547.9" x2="1913.0" y2="1547.9" stroke="#ff0000" stroke-width="1.0" stroke-dasharray="1.8 4.6" opacity="0.45"/>
<clipPath id="c4"><rect x="1079.6" y="1416.7" width="834.2" height="153.7"/></clipPath><g clip-path="url(#c4)">
<path d="M1080.4 1518.0 L1113.7 1526.1 L1147.0 1461.7 L1180.3 1473.0 L1213.6 1535.9 L1246.9 1502.9 L1280.2 1525.0 L1313.5 1462.9 L1346.8 1483.8 L1380.1 1500.5 L1413.4 1564.6 L1446.7 1526.1 L1480.0 1420.2 L1513.4 1512.6 L1546.7 1481.1 L1580.0 1477.2 L1613.3 1424.8 L1646.6 1451.2 L1679.9 1514.9 L1713.2 1442.3 L1746.5 1490.4 L1779.8 1481.1 L1813.1 1443.1 L1846.4 1464.0" stroke="#2828f0" stroke-width="1.7" fill="none"/>
<circle cx="1080.4" cy="1518.0" r="5.6" fill="#0c0cc8" stroke="#06067a" stroke-width="0.8"/>
<circle cx="1113.7" cy="1526.1" r="5.6" fill="#0c0cc8" stroke="#06067a" stroke-width="0.8"/>
<circle cx="1147.0" cy="1461.7" r="5.6" fill="#0c0cc8" stroke="#06067a" stroke-width="0.8"/>
<circle cx="1180.3" cy="1473.0" r="5.6" fill="#0c0cc8" stroke="#06067a" stroke-width="0.8"/>
<circle cx="1213.6" cy="1535.9" r="5.6" fill="#0c0cc8" stroke="#06067a" stroke-width="0.8"/>
<circle cx="1246.9" cy="1502.9" r="5.6" fill="#0c0cc8" stroke="#06067a" stroke-width="0.8"/>
<circle cx="1280.2" cy="1525.0" r="5.6" fill="#0c0cc8" stroke="#06067a" stroke-width="0.8"/>
<circle cx="1313.5" cy="1462.9" r="5.6" fill="#0c0cc8" stroke="#06067a" stroke-width="0.8"/>
<circle cx="1346.8" cy="1483.8" r="5.6" fill="#0c0cc8" stroke="#06067a" stroke-width="0.8"/>
<circle cx="1380.1" cy="1500.5" r="5.6" fill="#0c0cc8" stroke="#06067a" stroke-width="0.8"/>
<circle cx="1413.4" cy="1564.6" r="5.6" fill="#0c0cc8" stroke="#06067a" stroke-width="0.8"/>
<circle cx="1446.7" cy="1526.1" r="5.6" fill="#0c0cc8" stroke="#06067a" stroke-width="0.8"/>
<circle cx="1480.0" cy="1420.2" r="5.6" fill="#0c0cc8" stroke="#06067a" stroke-width="0.8"/>
<circle cx="1513.4" cy="1512.6" r="5.6" fill="#0c0cc8" stroke="#06067a" stroke-width="0.8"/>
<circle cx="1546.7" cy="1481.1" r="5.6" fill="#0c0cc8" stroke="#06067a" stroke-width="0.8"/>
<circle cx="1580.0" cy="1477.2" r="5.6" fill="#0c0cc8" stroke="#06067a" stroke-width="0.8"/>
<circle cx="1613.3" cy="1424.8" r="5.6" fill="#0c0cc8" stroke="#06067a" stroke-width="0.8"/>
<circle cx="1646.6" cy="1451.2" r="5.6" fill="#0c0cc8" stroke="#06067a" stroke-width="0.8"/>
<circle cx="1679.9" cy="1514.9" r="5.6" fill="#0c0cc8" stroke="#06067a" stroke-width="0.8"/>
<circle cx="1713.2" cy="1442.3" r="5.6" fill="#0c0cc8" stroke="#06067a" stroke-width="0.8"/>
<circle cx="1746.5" cy="1490.4" r="5.6" fill="#0c0cc8" stroke="#06067a" stroke-width="0.8"/>
<circle cx="1779.8" cy="1481.1" r="5.6" fill="#0c0cc8" stroke="#06067a" stroke-width="0.8"/>
<circle cx="1813.1" cy="1443.1" r="5.6" fill="#0c0cc8" stroke="#06067a" stroke-width="0.8"/>
<circle cx="1846.4" cy="1464.0" r="5.6" fill="#0c0cc8" stroke="#06067a" stroke-width="0.8"/>
</g>
<line x1="1080.4" y1="1569.6" x2="1080.4" y2="1562.6" stroke="#222" stroke-width="1.2"/>
<line x1="1080.4" y1="1417.5" x2="1080.4" y2="1424.5" stroke="#222" stroke-width="1.2"/>
<line x1="1246.9" y1="1569.6" x2="1246.9" y2="1562.6" stroke="#222" stroke-width="1.2"/>
<line x1="1246.9" y1="1417.5" x2="1246.9" y2="1424.5" stroke="#222" stroke-width="1.2"/>
<line x1="1413.4" y1="1569.6" x2="1413.4" y2="1562.6" stroke="#222" stroke-width="1.2"/>
<line x1="1413.4" y1="1417.5" x2="1413.4" y2="1424.5" stroke="#222" stroke-width="1.2"/>
<line x1="1580.0" y1="1569.6" x2="1580.0" y2="1562.6" stroke="#222" stroke-width="1.2"/>
<line x1="1580.0" y1="1417.5" x2="1580.0" y2="1424.5" stroke="#222" stroke-width="1.2"/>
<line x1="1746.5" y1="1569.6" x2="1746.5" y2="1562.6" stroke="#222" stroke-width="1.2"/>
<line x1="1746.5" y1="1417.5" x2="1746.5" y2="1424.5" stroke="#222" stroke-width="1.2"/>
<line x1="1913.0" y1="1569.6" x2="1913.0" y2="1562.6" stroke="#222" stroke-width="1.2"/>
<line x1="1913.0" y1="1417.5" x2="1913.0" y2="1424.5" stroke="#222" stroke-width="1.2"/>
<line x1="1080.4" y1="1417.5" x2="1087.4" y2="1417.5" stroke="#222" stroke-width="1.2"/>
<line x1="1913.0" y1="1417.5" x2="1906.0" y2="1417.5" stroke="#222" stroke-width="1.2"/>
<line x1="1080.4" y1="1439.2" x2="1087.4" y2="1439.2" stroke="#222" stroke-width="1.2"/>
<line x1="1913.0" y1="1439.2" x2="1906.0" y2="1439.2" stroke="#222" stroke-width="1.2"/>
<line x1="1080.4" y1="1461.0" x2="1087.4" y2="1461.0" stroke="#222" stroke-width="1.2"/>
<line x1="1913.0" y1="1461.0" x2="1906.0" y2="1461.0" stroke="#222" stroke-width="1.2"/>
<line x1="1080.4" y1="1482.7" x2="1087.4" y2="1482.7" stroke="#222" stroke-width="1.2"/>
<line x1="1913.0" y1="1482.7" x2="1906.0" y2="1482.7" stroke="#222" stroke-width="1.2"/>
<line x1="1080.4" y1="1504.4" x2="1087.4" y2="1504.4" stroke="#222" stroke-width="1.2"/>
<line x1="1913.0" y1="1504.4" x2="1906.0" y2="1504.4" stroke="#222" stroke-width="1.2"/>
<line x1="1080.4" y1="1526.1" x2="1087.4" y2="1526.1" stroke="#222" stroke-width="1.2"/>
<line x1="1913.0" y1="1526.1" x2="1906.0" y2="1526.1" stroke="#222" stroke-width="1.2"/>
<line x1="1080.4" y1="1547.9" x2="1087.4" y2="1547.9" stroke="#222" stroke-width="1.2"/>
<line x1="1913.0" y1="1547.9" x2="1906.0" y2="1547.9" stroke="#222" stroke-width="1.2"/>
<line x1="1080.4" y1="1569.6" x2="1087.4" y2="1569.6" stroke="#222" stroke-width="1.2"/>
<line x1="1913.0" y1="1569.6" x2="1906.0" y2="1569.6" stroke="#222" stroke-width="1.2"/>
<rect x="1080.4" y="1417.5" width="832.6" height="152.1" fill="none" stroke="#222" stroke-width="1.6"/>
<text x="1073.0" y="1422.0" font-size="13.60" text-anchor="end" fill="#222">250</text>
<text x="1073.0" y="1443.7" font-size="13.60" text-anchor="end" fill="#222">240</text>
<text x="1073.0" y="1465.5" font-size="13.60" text-anchor="end" fill="#222">230</text>
<text x="1073.0" y="1487.2" font-size="13.60" text-anchor="end" fill="#222">220</text>
<text x="1073.0" y="1508.9" font-size="13.60" text-anchor="end" fill="#222">210</text>
<text x="1073.0" y="1530.6" font-size="13.60" text-anchor="end" fill="#222">200</text>
<text x="1073.0" y="1552.4" font-size="13.60" text-anchor="end" fill="#222">190</text>
<text x="1073.0" y="1574.1" font-size="13.60" text-anchor="end" fill="#222">180</text>
<text x="1080.4" y="1591.0" font-size="13.60" text-anchor="middle" fill="#333">0</text>
<text x="1246.9" y="1591.0" font-size="13.60" text-anchor="middle" fill="#333">5</text>
<text x="1413.4" y="1591.0" font-size="13.60" text-anchor="middle" fill="#333">10</text>
<text x="1580.0" y="1591.0" font-size="13.60" text-anchor="middle" fill="#333">15</text>
<text x="1746.5" y="1591.0" font-size="13.60" text-anchor="middle" fill="#333">20</text>
<text x="1913.0" y="1591.0" font-size="13.60" text-anchor="middle" fill="#333">25</text>
<text x="1496.0" y="1410.0" font-size="18.80" text-anchor="middle" fill="#222">Bunch Center. Mean=218.38 pixel. Std=88.16 fs</text>
<rect x="2155.0" y="116.0" width="8.0" height="2.0" fill="#999"/>
<rect x="2155.0" y="119.0" width="7.0" height="10.0" fill="#fdfdfd"/>
<rect x="2154.0" y="131.5" width="10.0" height="1.6" fill="#bbb"/>
<text x="3275.0" y="133.5" font-size="23.20" font-weight="bold" fill="#3a3a3a">Emittance</text>
<text x="2153.3" y="170.8" font-size="20.62" fill="#222">about</text>
<text x="2960.3" y="236.8" font-size="36.05" class="se" fill="#33383a">Emittance Measurement</text>
<path d="M4001 272 C4040 245 4070 228 4078 222 L4072 230 C4060 244 4040 262 4028 272 Z" stroke="#efefed" stroke-width="1.6" fill="#0e5a9c"/>
<path d="M4030 272 C4062 244 4092 218 4107 205 L4100 216 C4086 236 4070 256 4058 272 Z" stroke="#efefed" stroke-width="1.6" fill="#76a62c"/>
<path d="M4058 272 C4078 240 4104 210 4124 192 C4112 212 4098 234 4097 232 C4118 226 4140 212 4146 196 C4152 180 4128 176 4100 180 C4068 185 4034 198 4014 212 C4040 192 4080 176 4112 175 C4150 174 4166 186 4158 206 C4150 228 4120 246 4088 254 C4084 260 4082 266 4080 272 Z" stroke="none" stroke-width="1" fill="#b3241e"/>
<text x="4080.5" y="304" font-size="26" class="lb" font-weight="bold" text-anchor="middle" fill="#231f20" textLength="107" lengthAdjust="spacingAndGlyphs">SINAP</text>
<rect x="2233.0" y="316.5" width="837.0" height="657.8" fill="#00007f"/>
<line x1="2373.9" y1="316.5" x2="2373.9" y2="974.3" stroke="#f00a30" stroke-width="1.5" stroke-dasharray="2.4 4.0" opacity="0.9"/>
<line x1="2513.4" y1="316.5" x2="2513.4" y2="974.3" stroke="#f00a30" stroke-width="1.5" stroke-dasharray="2.4 4.0" opacity="0.9"/>
<line x1="2792.4" y1="316.5" x2="2792.4" y2="974.3" stroke="#f00a30" stroke-width="1.5" stroke-dasharray="2.4 4.0" opacity="0.9"/>
<line x1="2233.0" y1="427.5" x2="3070.0" y2="427.5" stroke="#f00a30" stroke-width="1.5" stroke-dasharray="2.4 4.0" opacity="0.9"/>
<line x1="2233.0" y1="647.3" x2="3070.0" y2="647.3" stroke="#f00a30" stroke-width="1.5" stroke-dasharray="2.4 4.0" opacity="0.9"/>
<line x1="2233.0" y1="757.2" x2="3070.0" y2="757.2" stroke="#f00a30" stroke-width="1.5" stroke-dasharray="2.4 4.0" opacity="0.9"/>
<line x1="2233.0" y1="317.3" x2="3070.0" y2="317.3" stroke="#ff0000" stroke-width="1.1" stroke-dasharray="5 4" opacity="0.45"/>
<line x1="2233.4" y1="316.5" x2="2233.4" y2="974.3" stroke="#1a1a1a" stroke-width="1.6"/>
<ellipse cx="2835.6" cy="628" rx="24" ry="52" fill="url(#spot)" transform="rotate(20 2835.6 628)"/>
<rect x="2233" y="316.5" width="837" height="657.8" fill="none" stroke="#1a1a3a" stroke-width="1.2" opacity="0.55"/>
<line x1="2234.4" y1="974.3" x2="2234.4" y2="968.3" stroke="#000" stroke-width="1.1" opacity="0.7"/>
<line x1="2234.4" y1="316.5" x2="2234.4" y2="322.5" stroke="#000" stroke-width="1.1" opacity="0.7"/>
<line x1="2373.9" y1="974.3" x2="2373.9" y2="968.3" stroke="#000" stroke-width="1.1" opacity="0.7"/>
<line x1="2373.9" y1="316.5" x2="2373.9" y2="322.5" stroke="#000" stroke-width="1.1" opacity="0.7"/>
<line x1="2513.4" y1="974.3" x2="2513.4" y2="968.3" stroke="#000" stroke-width="1.1" opacity="0.7"/>
<line x1="2513.4" y1="316.5" x2="2513.4" y2="322.5" stroke="#000" stroke-width="1.1" opacity="0.7"/>
<line x1="2652.9" y1="974.3" x2="2652.9" y2="968.3" stroke="#000" stroke-width="1.1" opacity="0.7"/>
<line x1="2652.9" y1="316.5" x2="2652.9" y2="322.5" stroke="#000" stroke-width="1.1" opacity="0.7"/>
<line x1="2792.4" y1="974.3" x2="2792.4" y2="968.3" stroke="#000" stroke-width="1.1" opacity="0.7"/>
<line x1="2792.4" y1="316.5" x2="2792.4" y2="322.5" stroke="#000" stroke-width="1.1" opacity="0.7"/>
<line x1="2931.9" y1="974.3" x2="2931.9" y2="968.3" stroke="#000" stroke-width="1.1" opacity="0.7"/>
<line x1="2931.9" y1="316.5" x2="2931.9" y2="322.5" stroke="#000" stroke-width="1.1" opacity="0.7"/>
<line x1="2233.0" y1="317.6" x2="2239.0" y2="317.6" stroke="#000" stroke-width="1.1" opacity="0.7"/>
<line x1="3070.0" y1="317.6" x2="3064.0" y2="317.6" stroke="#000" stroke-width="1.1" opacity="0.7"/>
<line x1="2233.0" y1="427.5" x2="2239.0" y2="427.5" stroke="#000" stroke-width="1.1" opacity="0.7"/>
<line x1="3070.0" y1="427.5" x2="3064.0" y2="427.5" stroke="#000" stroke-width="1.1" opacity="0.7"/>
<line x1="2233.0" y1="537.4" x2="2239.0" y2="537.4" stroke="#000" stroke-width="1.1" opacity="0.7"/>
<line x1="3070.0" y1="537.4" x2="3064.0" y2="537.4" stroke="#000" stroke-width="1.1" opacity="0.7"/>
<line x1="2233.0" y1="647.3" x2="2239.0" y2="647.3" stroke="#000" stroke-width="1.1" opacity="0.7"/>
<line x1="3070.0" y1="647.3" x2="3064.0" y2="647.3" stroke="#000" stroke-width="1.1" opacity="0.7"/>
<line x1="2233.0" y1="757.2" x2="2239.0" y2="757.2" stroke="#000" stroke-width="1.1" opacity="0.7"/>
<line x1="3070.0" y1="757.2" x2="3064.0" y2="757.2" stroke="#000" stroke-width="1.1" opacity="0.7"/>
<line x1="2233.0" y1="867.1" x2="2239.0" y2="867.1" stroke="#000" stroke-width="1.1" opacity="0.7"/>
<line x1="3070.0" y1="867.1" x2="3064.0" y2="867.1" stroke="#000" stroke-width="1.1" opacity="0.7"/>
<text x="2225.0" y="320.6" font-size="12.40" text-anchor="end" fill="#222">0</text>
<text x="2225.0" y="430.5" font-size="12.40" text-anchor="end" fill="#222">50</text>
<text x="2225.0" y="540.4" font-size="12.40" text-anchor="end" fill="#222">100</text>
<text x="2225.0" y="650.3" font-size="12.40" text-anchor="end" fill="#222">150</text>
<text x="2225.0" y="760.2" font-size="12.40" text-anchor="end" fill="#222">200</text>
<text x="2225.0" y="870.1" font-size="12.40" text-anchor="end" fill="#222">250</text>
<text x="2235.4" y="993.5" font-size="12.80" text-anchor="middle" fill="#222">0</text>
<text x="2374.9" y="993.5" font-size="12.80" text-anchor="middle" fill="#222">50</text>
<text x="2514.4" y="993.5" font-size="12.80" text-anchor="middle" fill="#222">100</text>
<text x="2653.9" y="993.5" font-size="12.80" text-anchor="middle" fill="#222">150</text>
<text x="2793.4" y="993.5" font-size="12.80" text-anchor="middle" fill="#222">200</text>
<text x="2932.9" y="993.5" font-size="12.80" text-anchor="middle" fill="#222">250</text>
<text x="2650.6" y="309.8" font-size="17.10" text-anchor="middle" fill="#222">Porfile Image</text>
<text x="2649.8" y="1020.5" font-size="20.20" text-anchor="middle" fill="#1a1a1a" textLength="88" lengthAdjust="spacingAndGlyphs">x (pixel)</text>
<text x="2186.5" y="645.0" font-size="20.20" text-anchor="middle" fill="#1a1a1a" transform="rotate(-90 2186.5 645.0)" textLength="88" lengthAdjust="spacingAndGlyphs">y (pixel)</text>
<rect x="3193.8" y="328.3" width="771.6" height="651.7" fill="#fff"/>
<line x1="3348.1" y1="328.3" x2="3348.1" y2="980.0" stroke="#ff0000" stroke-width="1.2" stroke-dasharray="1.8 4.6" opacity="0.7"/>
<line x1="3502.4" y1="328.3" x2="3502.4" y2="980.0" stroke="#ff0000" stroke-width="1.2" stroke-dasharray="1.8 4.6" opacity="0.7"/>
<line x1="3656.8" y1="328.3" x2="3656.8" y2="980.0" stroke="#ff0000" stroke-width="1.2" stroke-dasharray="1.8 4.6" opacity="0.7"/>
<line x1="3193.8" y1="400.7" x2="3965.4" y2="400.7" stroke="#ff0000" stroke-width="1.2" stroke-dasharray="1.8 4.6" opacity="0.7"/>
<line x1="3193.8" y1="473.1" x2="3965.4" y2="473.1" stroke="#ff0000" stroke-width="1.2" stroke-dasharray="1.8 4.6" opacity="0.7"/>
<line x1="3193.8" y1="545.5" x2="3965.4" y2="545.5" stroke="#ff0000" stroke-width="1.2" stroke-dasharray="1.8 4.6" opacity="0.7"/>
<line x1="3193.8" y1="617.9" x2="3965.4" y2="617.9" stroke="#ff0000" stroke-width="1.2" stroke-dasharray="1.8 4.6" opacity="0.7"/>
<line x1="3193.8" y1="690.4" x2="3965.4" y2="690.4" stroke="#ff0000" stroke-width="1.2" stroke-dasharray="1.8 4.6" opacity="0.7"/>
<line x1="3193.8" y1="762.8" x2="3965.4" y2="762.8" stroke="#ff0000" stroke-width="1.2" stroke-dasharray="1.8 4.6" opacity="0.7"/>
<line x1="3193.8" y1="835.2" x2="3965.4" y2="835.2" stroke="#ff0000" stroke-width="1.2" stroke-dasharray="1.8 4.6" opacity="0.7"/>
<line x1="3193.8" y1="907.6" x2="3965.4" y2="907.6" stroke="#ff0000" stroke-width="1.2" stroke-dasharray="1.8 4.6" opacity="0.7"/>
<clipPath id="c5"><rect x="3193.8" y="328.3" width="771.5999999999999" height="651.7"/></clipPath><g clip-path="url(#c5)">
<path d="M3218.5 319.6 L3224.7 338.7 L3231.0 357.4 L3237.2 375.8 L3243.4 393.9 L3249.7 411.7 L3255.9 429.2 L3262.1 446.3 L3268.4 463.2 L3274.6 479.8 L3280.8 496.0 L3287.1 511.9 L3293.3 527.6 L3299.5 542.9 L3305.8 557.9 L3312.0 572.6 L3318.2 587.0 L3324.5 601.1 L3330.7 614.9 L3336.9 628.4 L3343.2 641.5 L3349.4 654.4 L3355.7 666.9 L3361.9 679.2 L3368.1 691.1 L3374.4 702.7 L3380.6 714.0 L3386.8 725.1 L3393.1 735.7 L3399.3 746.1 L3405.5 756.2 L3411.8 766.0 L3418.0 775.5 L3424.2 784.6 L3430.5 793.5 L3436.7 802.0 L3442.9 810.2 L3449.2 818.1 L3455.4 825.8 L3461.6 833.1 L3467.9 840.1 L3474.1 846.7 L3480.3 853.1 L3486.6 859.2 L3492.8 865.0 L3499.0 870.4 L3505.3 875.5 L3511.5 880.4 L3517.7 884.9 L3524.0 889.1 L3530.2 893.0 L3536.5 896.6 L3542.7 899.9 L3548.9 902.9 L3555.2 905.6 L3561.4 908.0 L3567.6 910.0 L3573.9 911.8 L3580.1 913.2 L3586.3 914.4 L3592.6 915.2 L3598.8 915.7 L3605.0 915.9 L3611.3 915.8 L3617.5 915.4 L3623.7 914.7 L3630.0 913.7 L3636.2 912.3 L3642.4 910.7 L3648.7 908.7 L3654.9 906.5 L3661.1 903.9 L3667.4 901.0 L3673.6 897.9 L3679.8 894.4 L3686.1 890.6 L3692.3 886.5 L3698.5 882.0 L3704.8 877.3 L3711.0 872.3 L3717.3 866.9 L3723.5 861.3 L3729.7 855.3 L3736.0 849.0 L3742.2 842.5 L3748.4 835.6 L3754.7 828.4 L3760.9 820.9 L3767.1 813.1 L3773.4 805.0 L3779.6 796.5 L3785.8 787.8 L3792.1 778.8 L3798.3 769.4 L3804.5 759.7 L3810.8 749.8 L3817.0 739.5 L3823.2 728.9 L3829.5 718.0 L3835.7 706.8 L3841.9 695.3" stroke="#ff0404" stroke-width="3.2" fill="none"/>
<line x1="3224.7" y1="502.8" x2="3224.7" y2="544.8" stroke="#f03030" stroke-width="1.4"/>
<line x1="3219.7" y1="502.8" x2="3229.7" y2="502.8" stroke="#f03030" stroke-width="1.4"/>
<line x1="3219.7" y1="544.8" x2="3229.7" y2="544.8" stroke="#f03030" stroke-width="1.4"/>
<circle cx="3224.7" cy="523.8" r="4.9" fill="#e00808" stroke="#5a0000" stroke-width="0.9"/>
<line x1="3286.4" y1="508.6" x2="3286.4" y2="579.6" stroke="#f7a0a0" stroke-width="1.4"/>
<line x1="3281.4" y1="508.6" x2="3291.4" y2="508.6" stroke="#f7a0a0" stroke-width="1.4"/>
<line x1="3281.4" y1="579.6" x2="3291.4" y2="579.6" stroke="#f7a0a0" stroke-width="1.4"/>
<circle cx="3286.4" cy="545.5" r="4.9" fill="#e00808" stroke="#5a0000" stroke-width="0.9"/>
<line x1="3348.1" y1="610.7" x2="3348.1" y2="639.7" stroke="#f46060" stroke-width="1.4"/>
<line x1="3343.1" y1="610.7" x2="3353.1" y2="610.7" stroke="#f46060" stroke-width="1.4"/>
<line x1="3343.1" y1="639.7" x2="3353.1" y2="639.7" stroke="#f46060" stroke-width="1.4"/>
<circle cx="3348.1" cy="625.2" r="4.9" fill="#e00808" stroke="#5a0000" stroke-width="0.9"/>
<line x1="3409.8" y1="710.6" x2="3409.8" y2="742.5" stroke="#f46060" stroke-width="1.4"/>
<line x1="3404.8" y1="710.6" x2="3414.8" y2="710.6" stroke="#f46060" stroke-width="1.4"/>
<line x1="3404.8" y1="742.5" x2="3414.8" y2="742.5" stroke="#f46060" stroke-width="1.4"/>
<circle cx="3409.8" cy="726.6" r="4.9" fill="#e00808" stroke="#5a0000" stroke-width="0.9"/>
<line x1="3471.6" y1="823.6" x2="3471.6" y2="832.3" stroke="#f03030" stroke-width="1.4"/>
<circle cx="3471.6" cy="827.9" r="4.9" fill="#e00808" stroke="#5a0000" stroke-width="0.9"/>
<line x1="3533.3" y1="889.5" x2="3533.3" y2="896.7" stroke="#f03030" stroke-width="1.4"/>
<circle cx="3533.3" cy="893.1" r="4.9" fill="#e00808" stroke="#5a0000" stroke-width="0.9"/>
<line x1="3595.0" y1="916.3" x2="3595.0" y2="927.9" stroke="#f03030" stroke-width="1.4"/>
<circle cx="3595.0" cy="922.1" r="4.9" fill="#e00808" stroke="#5a0000" stroke-width="0.9"/>
<line x1="3656.8" y1="948.1" x2="3656.8" y2="953.9" stroke="#f03030" stroke-width="1.4"/>
<circle cx="3656.8" cy="951.0" r="4.9" fill="#e00808" stroke="#5a0000" stroke-width="0.9"/>
<line x1="3718.5" y1="883.0" x2="3718.5" y2="903.2" stroke="#f03030" stroke-width="1.4"/>
<line x1="3713.5" y1="883.0" x2="3723.5" y2="883.0" stroke="#f03030" stroke-width="1.4"/>
<line x1="3713.5" y1="903.2" x2="3723.5" y2="903.2" stroke="#f03030" stroke-width="1.4"/>
<circle cx="3718.5" cy="893.1" r="4.9" fill="#e00808" stroke="#5a0000" stroke-width="0.9"/>
<line x1="3780.2" y1="752.6" x2="3780.2" y2="758.4" stroke="#f03030" stroke-width="1.4"/>
<circle cx="3780.2" cy="755.5" r="4.9" fill="#e00808" stroke="#5a0000" stroke-width="0.9"/>
<line x1="3841.9" y1="623.0" x2="3841.9" y2="669.4" stroke="#f03030" stroke-width="1.4"/>
<line x1="3836.9" y1="623.0" x2="3846.9" y2="623.0" stroke="#f03030" stroke-width="1.4"/>
<line x1="3836.9" y1="669.4" x2="3846.9" y2="669.4" stroke="#f03030" stroke-width="1.4"/>
<circle cx="3841.9" cy="646.9" r="4.9" fill="#e00808" stroke="#5a0000" stroke-width="0.9"/>
</g>
<line x1="3193.8" y1="980.0" x2="3193.8" y2="973.0" stroke="#333" stroke-width="1.2"/>
<line x1="3193.8" y1="328.3" x2="3193.8" y2="335.3" stroke="#333" stroke-width="1.2"/>
<line x1="3348.1" y1="980.0" x2="3348.1" y2="973.0" stroke="#333" stroke-width="1.2"/>
<line x1="3348.1" y1="328.3" x2="3348.1" y2="335.3" stroke="#333" stroke-width="1.2"/>
<line x1="3502.4" y1="980.0" x2="3502.4" y2="973.0" stroke="#333" stroke-width="1.2"/>
<line x1="3502.4" y1="328.3" x2="3502.4" y2="335.3" stroke="#333" stroke-width="1.2"/>
<line x1="3656.8" y1="980.0" x2="3656.8" y2="973.0" stroke="#333" stroke-width="1.2"/>
<line x1="3656.8" y1="328.3" x2="3656.8" y2="335.3" stroke="#333" stroke-width="1.2"/>
<line x1="3811.1" y1="980.0" x2="3811.1" y2="973.0" stroke="#333" stroke-width="1.2"/>
<line x1="3811.1" y1="328.3" x2="3811.1" y2="335.3" stroke="#333" stroke-width="1.2"/>
<line x1="3965.4" y1="980.0" x2="3965.4" y2="973.0" stroke="#333" stroke-width="1.2"/>
<line x1="3965.4" y1="328.3" x2="3965.4" y2="335.3" stroke="#333" stroke-width="1.2"/>
<line x1="3193.8" y1="328.3" x2="3200.8" y2="328.3" stroke="#333" stroke-width="1.2"/>
<line x1="3965.4" y1="328.3" x2="3958.4" y2="328.3" stroke="#333" stroke-width="1.2"/>
<line x1="3193.8" y1="400.7" x2="3200.8" y2="400.7" stroke="#333" stroke-width="1.2"/>
<line x1="3965.4" y1="400.7" x2="3958.4" y2="400.7" stroke="#333" stroke-width="1.2"/>
<line x1="3193.8" y1="473.1" x2="3200.8" y2="473.1" stroke="#333" stroke-width="1.2"/>
<line x1="3965.4" y1="473.1" x2="3958.4" y2="473.1" stroke="#333" stroke-width="1.2"/>
<line x1="3193.8" y1="545.5" x2="3200.8" y2="545.5" stroke="#333" stroke-width="1.2"/>
<line x1="3965.4" y1="545.5" x2="3958.4" y2="545.5" stroke="#333" stroke-width="1.2"/>
<line x1="3193.8" y1="617.9" x2="3200.8" y2="617.9" stroke="#333" stroke-width="1.2"/>
<line x1="3965.4" y1="617.9" x2="3958.4" y2="617.9" stroke="#333" stroke-width="1.2"/>
<line x1="3193.8" y1="690.4" x2="3200.8" y2="690.4" stroke="#333" stroke-width="1.2"/>
<line x1="3965.4" y1="690.4" x2="3958.4" y2="690.4" stroke="#333" stroke-width="1.2"/>
<line x1="3193.8" y1="762.8" x2="3200.8" y2="762.8" stroke="#333" stroke-width="1.2"/>
<line x1="3965.4" y1="762.8" x2="3958.4" y2="762.8" stroke="#333" stroke-width="1.2"/>
<line x1="3193.8" y1="835.2" x2="3200.8" y2="835.2" stroke="#333" stroke-width="1.2"/>
<line x1="3965.4" y1="835.2" x2="3958.4" y2="835.2" stroke="#333" stroke-width="1.2"/>
<line x1="3193.8" y1="907.6" x2="3200.8" y2="907.6" stroke="#333" stroke-width="1.2"/>
<line x1="3965.4" y1="907.6" x2="3958.4" y2="907.6" stroke="#333" stroke-width="1.2"/>
<line x1="3193.8" y1="980.0" x2="3200.8" y2="980.0" stroke="#333" stroke-width="1.2"/>
<line x1="3965.4" y1="980.0" x2="3958.4" y2="980.0" stroke="#333" stroke-width="1.2"/>
<rect x="3193.8" y="328.3" width="771.6" height="651.7" fill="none" stroke="#333" stroke-width="1.6"/>
<text x="3188.0" y="333.1" font-size="14.50" class="ls" text-anchor="end" fill="#222" letter-spacing="1.5">0.13</text>
<text x="3188.0" y="405.5" font-size="14.50" class="ls" text-anchor="end" fill="#222" letter-spacing="1.5">0.12</text>
<text x="3188.0" y="477.9" font-size="14.50" class="ls" text-anchor="end" fill="#222" letter-spacing="1.5">0.11</text>
<text x="3188.0" y="550.3" font-size="14.50" class="ls" text-anchor="end" fill="#222" letter-spacing="1.5">0.10</text>
<text x="3188.0" y="622.7" font-size="14.50" class="ls" text-anchor="end" fill="#222" letter-spacing="1.5">0.09</text>
<text x="3188.0" y="695.2" font-size="14.50" class="ls" text-anchor="end" fill="#222" letter-spacing="1.5">0.08</text>
<text x="3188.0" y="767.6" font-size="14.50" class="ls" text-anchor="end" fill="#222" letter-spacing="1.5">0.07</text>
<text x="3188.0" y="840.0" font-size="14.50" class="ls" text-anchor="end" fill="#222" letter-spacing="1.5">0.06</text>
<text x="3188.0" y="912.4" font-size="14.50" class="ls" text-anchor="end" fill="#222" letter-spacing="1.5">0.05</text>
<text x="3188.0" y="984.8" font-size="14.50" class="ls" text-anchor="end" fill="#222" letter-spacing="1.5">0.04</text>
<text x="3193.8" y="996.3" font-size="14.50" class="ls" text-anchor="middle" fill="#222" letter-spacing="1.8">0.5</text>
<text x="3348.1" y="996.3" font-size="14.50" class="ls" text-anchor="middle" fill="#222" letter-spacing="1.8">1.0</text>
<text x="3502.4" y="996.3" font-size="14.50" class="ls" text-anchor="middle" fill="#222" letter-spacing="1.8">1.5</text>
<text x="3656.8" y="996.3" font-size="14.50" class="ls" text-anchor="middle" fill="#222" letter-spacing="1.8">2.0</text>
<text x="3811.1" y="996.3" font-size="14.50" class="ls" text-anchor="middle" fill="#222" letter-spacing="1.8">2.5</text>
<text x="3965.4" y="996.3" font-size="14.50" class="ls" text-anchor="middle" fill="#222" letter-spacing="1.8">3.0</text>
<text x="3533.5" y="320.8" font-size="17.13" fill="#222">Beam Size</text>
<text x="3579.0" y="1029.3" font-size="24.00" class="ls" font-style="italic" text-anchor="middle" fill="#222">I(A)</text>
<text x="3141.0" y="654.0" font-size="22.00" class="ls" font-style="italic" text-anchor="middle" fill="#222" transform="rotate(-90 3141.0 654.0)" letter-spacing="1">σ(mm)</text>
<line x1="2631.5" y1="1074.0" x2="2631.5" y2="1500.0" stroke="#a9a9a7" stroke-width="1.6"/>
<line x1="2633.0" y1="1074.0" x2="2633.0" y2="1500.0" stroke="#e2e2e0" stroke-width="1.2"/>
<line x1="3331.5" y1="1074.0" x2="3331.5" y2="1500.0" stroke="#b4b4b2" stroke-width="1.6"/>
<line x1="3333.0" y1="1074.0" x2="3333.0" y2="1500.0" stroke="#e0e0de" stroke-width="1.2"/>
<line x1="3368.0" y1="1074.0" x2="3368.0" y2="1497.0" stroke="#b9b9b7" stroke-width="1.6"/>
<line x1="3369.5" y1="1074.0" x2="3369.5" y2="1497.0" stroke="#e2e2e0" stroke-width="1.2"/>
<line x1="3930.5" y1="1074.0" x2="3930.5" y2="1497.0" stroke="#c0c0be" stroke-width="1.6"/>
<text x="2347.5" y="1110.6" font-size="19.60" fill="#26262c" textLength="63.9" lengthAdjust="spacingAndGlyphs" stroke="#26262c" stroke-width="0.45">Porfile</text>
<text x="2195.0" y="1157.2" font-size="20.53" fill="#26262c" textLength="106.6" lengthAdjust="spacingAndGlyphs" stroke="#26262c" stroke-width="0.45">Show Hist</text>
<text x="2195.0" y="1194.3" font-size="20.46" fill="#26262c" textLength="86.5" lengthAdjust="spacingAndGlyphs" stroke="#26262c" stroke-width="0.45">Show fit</text>
<text x="2402.0" y="1157.2" font-size="20.22" fill="#26262c" textLength="91.4" lengthAdjust="spacingAndGlyphs" stroke="#26262c" stroke-width="0.45">500*500</text>
<path d="M2380.5 1186.7 L2384.0 1191.6 L2391.5 1181.4" stroke="#333" stroke-width="2.2" fill="none" stroke-linejoin="round"/>
<text x="2402.0" y="1194.3" font-size="20.22" fill="#26262c" textLength="91.4" lengthAdjust="spacingAndGlyphs" stroke="#26262c" stroke-width="0.45">300*300</text>
<text x="2402.0" y="1237.2" font-size="20.22" fill="#26262c" textLength="91.4" lengthAdjust="spacingAndGlyphs" stroke="#26262c" stroke-width="0.45">200*200</text>
<text x="2181.7" y="1237.2" font-size="19.82" fill="#26262c" textLength="169.9" lengthAdjust="spacingAndGlyphs" stroke="#26262c" stroke-width="0.45">Sub Background</text>
<line x1="2168.0" y1="1250.6" x2="2598.0" y2="1250.6" stroke="#c6c6c4" stroke-width="1.4"/>
<line x1="2168.0" y1="1252.0" x2="2598.0" y2="1252.0" stroke="#e0e0de" stroke-width="1.2"/>
<text x="2271.8" y="1283.4" font-size="20.20" fill="#26262c" textLength="108.0" lengthAdjust="spacingAndGlyphs" stroke="#26262c" stroke-width="0.45">Horizontal</text>
<text x="2407.6" y="1283.4" font-size="19.82" fill="#26262c" textLength="77.7" lengthAdjust="spacingAndGlyphs" stroke="#26262c" stroke-width="0.45">Vertical</text>
<text x="2179.2" y="1331.9" font-size="19.52" fill="#26262c" textLength="68.8" lengthAdjust="spacingAndGlyphs" stroke="#26262c" stroke-width="0.45">Center</text>
<text x="2275.0" y="1332.3" font-size="19.86" fill="#222" textLength="72.8" lengthAdjust="spacingAndGlyphs" stroke="#222" stroke-width="0.45">215.53</text>
<text x="2394.5" y="1332.3" font-size="19.86" fill="#222" textLength="72.8" lengthAdjust="spacingAndGlyphs" stroke="#222" stroke-width="0.45">142.92</text>
<text x="2510.5" y="1331.9" font-size="19.49" fill="#26262c" textLength="47.2" lengthAdjust="spacingAndGlyphs" stroke="#26262c" stroke-width="0.45">Pixel</text>
<text x="2182.5" y="1380.6" font-size="19.23" fill="#26262c" textLength="63.1" lengthAdjust="spacingAndGlyphs" stroke="#26262c" stroke-width="0.45">Sigma</text>
<text x="2275.0" y="1381.0" font-size="19.86" fill="#222" textLength="46.3" lengthAdjust="spacingAndGlyphs" stroke="#222" stroke-width="0.45">3.54</text>
<text x="2394.5" y="1381.0" font-size="19.86" fill="#222" textLength="46.3" lengthAdjust="spacingAndGlyphs" stroke="#222" stroke-width="0.45">7.22</text>
<text x="2510.5" y="1380.6" font-size="19.49" fill="#26262c" textLength="47.2" lengthAdjust="spacingAndGlyphs" stroke="#26262c" stroke-width="0.45">Pixel</text>
<text x="2167.3" y="1429.1" font-size="19.47" fill="#26262c" textLength="94.4" lengthAdjust="spacingAndGlyphs" stroke="#26262c" stroke-width="0.45">Exposure</text>
<text x="2275.0" y="1429.5" font-size="20.80" fill="#222" stroke="#222" stroke-width="0.45">0</text>
<path d="M2365.3 1414.6 L2369.5 1410.4 L2373.7 1414.6" stroke="#666" stroke-width="1.5" fill="none"/>
<path d="M2365.3 1429.4 L2369.5 1433.6 L2373.7 1429.4" stroke="#666" stroke-width="1.5" fill="none"/>
<text x="2411.4" y="1429.1" font-size="20.03" fill="#26262c" textLength="69.9" lengthAdjust="spacingAndGlyphs" stroke="#26262c" stroke-width="0.45">X start</text>
<text x="2516.5" y="1429.5" font-size="20.80" fill="#222" stroke="#222" stroke-width="0.45">0</text>
<path d="M2578.8 1414.6 L2583.0 1410.4 L2587.2 1414.6" stroke="#666" stroke-width="1.5" fill="none"/>
<path d="M2578.8 1429.4 L2583.0 1433.6 L2587.2 1429.4" stroke="#666" stroke-width="1.5" fill="none"/>
<text x="2190.6" y="1477.0" font-size="19.35" fill="#26262c" textLength="46.6" lengthAdjust="spacingAndGlyphs" stroke="#26262c" stroke-width="0.45">Gain</text>
<text x="2275.0" y="1478.0" font-size="20.80" fill="#222" stroke="#222" stroke-width="0.45">0</text>
<path d="M2365.3 1463.3 L2369.5 1459.1 L2373.7 1463.3" stroke="#666" stroke-width="1.5" fill="none"/>
<path d="M2365.3 1478.1 L2369.5 1482.3 L2373.7 1478.1" stroke="#666" stroke-width="1.5" fill="none"/>
<text x="2411.4" y="1477.0" font-size="20.49" fill="#26262c" textLength="69.9" lengthAdjust="spacingAndGlyphs" stroke="#26262c" stroke-width="0.45">Y start</text>
<text x="2516.5" y="1478.0" font-size="20.80" fill="#222" stroke="#222" stroke-width="0.45">0</text>
<path d="M2578.8 1463.3 L2583.0 1459.1 L2587.2 1463.3" stroke="#666" stroke-width="1.5" fill="none"/>
<path d="M2578.8 1478.1 L2583.0 1482.3 L2587.2 1478.1" stroke="#666" stroke-width="1.5" fill="none"/>
<text x="2893.7" y="1098.9" font-size="19.95" fill="#26262c" textLength="177.0" lengthAdjust="spacingAndGlyphs" stroke="#26262c" stroke-width="0.45">Scan Parameters</text>
<text x="2660.8" y="1137.3" font-size="19.67" fill="#26262c" textLength="124.2" lengthAdjust="spacingAndGlyphs" stroke="#26262c" stroke-width="0.45">LA-BI:PRF40</text>
<path d="M2963.5 1129.0 L2967.5 1133.0 L2971.5 1129.0" stroke="#555" stroke-width="1.5" fill="none"/>
<text x="3004.3" y="1139.3" font-size="19.82" fill="#26262c" textLength="140.3" lengthAdjust="spacingAndGlyphs" stroke="#26262c" stroke-width="0.45">Energy (MeV)</text>
<text x="3187.7" y="1139.5" font-size="19.86" fill="#222" textLength="86.0" lengthAdjust="spacingAndGlyphs" stroke="#222" stroke-width="0.45">1380.00</text>
<path d="M3303.8 1123.6 L3308.0 1119.4 L3312.2 1123.6" stroke="#666" stroke-width="1.5" fill="none"/>
<path d="M3303.8 1139.4 L3308.0 1143.6 L3312.2 1139.4" stroke="#666" stroke-width="1.5" fill="none"/>
<text x="2695.1" y="1192.1" font-size="19.58" fill="#26262c" textLength="76.9" lengthAdjust="spacingAndGlyphs" stroke="#26262c" stroke-width="0.45">Method</text>
<text x="2826.1" y="1192.5" font-size="19.67" fill="#26262c" textLength="143.5" lengthAdjust="spacingAndGlyphs" stroke="#26262c" stroke-width="0.45">Tranfer Matrix</text>
<path d="M3137.5 1183.0 L3141.5 1187.0 L3145.5 1183.0" stroke="#555" stroke-width="1.5" fill="none"/>
<line x1="2655.0" y1="1215.4" x2="3318.0" y2="1215.4" stroke="#c6c6c4" stroke-width="1.4"/>
<line x1="2655.0" y1="1216.8" x2="3318.0" y2="1216.8" stroke="#e0e0de" stroke-width="1.2"/>
<line x1="2987.4" y1="1226.0" x2="2987.4" y2="1490.0" stroke="#bebebc" stroke-width="1.4"/>
<line x1="2988.8" y1="1226.0" x2="2988.8" y2="1490.0" stroke="#e0e0de" stroke-width="1.2"/>
<text x="2675.3" y="1253.8" font-size="19.84" fill="#26262c" textLength="116.5" lengthAdjust="spacingAndGlyphs" stroke="#26262c" stroke-width="0.45">Scan (I [A])</text>
<text x="2873.9" y="1253.8" font-size="19.97" fill="#26262c" textLength="51.8" lengthAdjust="spacingAndGlyphs" stroke="#26262c" stroke-width="0.45">From</text>
<text x="3062.5" y="1253.8" font-size="21.68" fill="#26262c" textLength="23.9" lengthAdjust="spacingAndGlyphs" stroke="#26262c" stroke-width="0.45">To</text>
<path d="M3167.5 1247.6 L3170.8 1252.4 L3178.0 1242.4" stroke="#333" stroke-width="2.2" fill="none" stroke-linejoin="round"/>
<text x="3189.1" y="1256.1" font-size="24.88" fill="#26262c" textLength="97.6" lengthAdjust="spacingAndGlyphs" stroke="#26262c" stroke-width="0.45">X Plane</text>
<text x="3189.1" y="1309.1" font-size="24.95" fill="#26262c" textLength="95.9" lengthAdjust="spacingAndGlyphs" stroke="#26262c" stroke-width="0.45">Y Plane</text>
<text x="2734.0" y="1307.6" font-size="19.67" text-anchor="middle" fill="#26262c" textLength="107.9" lengthAdjust="spacingAndGlyphs" stroke="#26262c" stroke-width="0.45">LA-PS:Q62</text>
<text x="2826.0" y="1308.0" font-size="19.86" fill="#222" textLength="46.3" lengthAdjust="spacingAndGlyphs" stroke="#222" stroke-width="0.45">0.60</text>
<path d="M2963.8 1293.9 L2968.0 1289.7 L2972.2 1293.9" stroke="#666" stroke-width="1.5" fill="none"/>
<path d="M2963.8 1309.7 L2968.0 1313.9 L2972.2 1309.7" stroke="#666" stroke-width="1.5" fill="none"/>
<text x="2998.6" y="1308.0" font-size="19.86" fill="#222" textLength="46.3" lengthAdjust="spacingAndGlyphs" stroke="#222" stroke-width="0.45">2.60</text>
<path d="M3137.8 1293.9 L3142.0 1289.7 L3146.2 1293.9" stroke="#666" stroke-width="1.5" fill="none"/>
<path d="M3137.8 1309.7 L3142.0 1313.9 L3146.2 1309.7" stroke="#666" stroke-width="1.5" fill="none"/>
<text x="2734.0" y="1367.5" font-size="19.67" text-anchor="middle" fill="#26262c" textLength="107.9" lengthAdjust="spacingAndGlyphs" stroke="#26262c" stroke-width="0.45">LA-PS:Q61</text>
<text x="2826.0" y="1367.8" font-size="19.86" fill="#222" textLength="53.8" lengthAdjust="spacingAndGlyphs" stroke="#222" stroke-width="0.45">-1.73</text>
<text x="2993.5" y="1367.5" font-size="19.76" fill="#26262c" textLength="57.9" lengthAdjust="spacingAndGlyphs" stroke="#26262c" stroke-width="0.45">Steps</text>
<text x="3167.0" y="1367.8" font-size="19.86" fill="#222" textLength="26.5" lengthAdjust="spacingAndGlyphs" stroke="#222" stroke-width="0.45">11</text>
<path d="M3303.8 1352.5 L3308.0 1348.3 L3312.2 1352.5" stroke="#666" stroke-width="1.5" fill="none"/>
<path d="M3303.8 1368.3 L3308.0 1372.5 L3312.2 1368.3" stroke="#666" stroke-width="1.5" fill="none"/>
<text x="2652.6" y="1420.8" font-size="19.72" fill="#26262c" textLength="158.1" lengthAdjust="spacingAndGlyphs" stroke="#26262c" stroke-width="0.45">Threshold(mm)</text>
<text x="2826.0" y="1421.3" font-size="19.86" fill="#222" textLength="46.3" lengthAdjust="spacingAndGlyphs" stroke="#222" stroke-width="0.45">1.00</text>
<path d="M2963.8 1406.6 L2968.0 1402.4 L2972.2 1406.6" stroke="#666" stroke-width="1.5" fill="none"/>
<path d="M2963.8 1422.4 L2968.0 1426.6 L2972.2 1422.4" stroke="#666" stroke-width="1.5" fill="none"/>
<text x="2993.5" y="1420.8" font-size="19.46" fill="#26262c" textLength="87.0" lengthAdjust="spacingAndGlyphs" stroke="#26262c" stroke-width="0.45">Samples</text>
<text x="3167.0" y="1421.3" font-size="20.80" fill="#222" stroke="#222" stroke-width="0.45">3</text>
<path d="M3303.8 1406.6 L3308.0 1402.4 L3312.2 1406.6" stroke="#666" stroke-width="1.5" fill="none"/>
<path d="M3303.8 1422.4 L3308.0 1426.6 L3312.2 1422.4" stroke="#666" stroke-width="1.5" fill="none"/>
<text x="2653.5" y="1475.3" font-size="20.12" fill="#26262c" textLength="72.8" lengthAdjust="spacingAndGlyphs" stroke="#26262c" stroke-width="0.45">Cut(%)</text>
<text x="2826.0" y="1473.0" font-size="19.67" fill="#26262c" textLength="26.2" lengthAdjust="spacingAndGlyphs" stroke="#26262c" stroke-width="0.45">95</text>
<path d="M2964.0 1464.0 L2968.0 1468.0 L2972.0 1464.0" stroke="#555" stroke-width="1.5" fill="none"/>
<text x="2995.5" y="1475.3" font-size="19.35" fill="#26262c" textLength="120.9" lengthAdjust="spacingAndGlyphs" stroke="#26262c" stroke-width="0.45">Background</text>
<text x="3167.0" y="1475.6" font-size="19.86" fill="#222" textLength="46.3" lengthAdjust="spacingAndGlyphs" stroke="#222" stroke-width="0.45">0.20</text>
<path d="M3303.8 1460.5 L3308.0 1456.3 L3312.2 1460.5" stroke="#666" stroke-width="1.5" fill="none"/>
<path d="M3303.8 1476.3 L3308.0 1480.5 L3312.2 1476.3" stroke="#666" stroke-width="1.5" fill="none"/>
<text x="3538.3" y="1098.7" font-size="19.79" fill="#26262c" textLength="223.7" lengthAdjust="spacingAndGlyphs" stroke="#26262c" stroke-width="0.45">Measurement Results</text>
<text x="3435.6" y="1145.4" font-size="20.48" font-weight="bold" fill="#2a2a30" textLength="61.0" lengthAdjust="spacingAndGlyphs" stroke="#2a2a30" stroke-width="0.45">Start</text>
<text x="3600.6" y="1145.4" font-size="20.67" font-weight="bold" fill="#2a2a30" textLength="56.3" lengthAdjust="spacingAndGlyphs" stroke="#2a2a30" stroke-width="0.45">Stop</text>
<text x="3424.7" y="1198.9" font-size="19.76" fill="#26262c" textLength="88.3" lengthAdjust="spacingAndGlyphs" stroke="#26262c" stroke-width="0.45">Progress</text>
<text x="3628.4" y="1198.8" font-size="19.48" text-anchor="middle" fill="#fff" textLength="58.3" lengthAdjust="spacingAndGlyphs" stroke="#fff" stroke-width="0.45">100%</text>
<text x="3474.4" y="1238.0" font-size="18.02" fill="#2a2a30" textLength="141.3" lengthAdjust="spacingAndGlyphs" stroke="#2a2a30" stroke-width="0.45">Transfer Matrix</text>
<text x="3687.1" y="1238.0" font-size="18.08" fill="#2a2a30" textLength="121.2" lengthAdjust="spacingAndGlyphs" stroke="#2a2a30" stroke-width="0.45">Quadratic Fit</text>
<text x="3453.2" y="1283.4" font-size="24.83" fill="#fb1616" textLength="74.4" lengthAdjust="spacingAndGlyphs" stroke="#fb1616" stroke-width="0.45">1.617</text>
<text x="3655.3" y="1283.4" font-size="24.83" fill="#fb1616" textLength="74.4" lengthAdjust="spacingAndGlyphs" stroke="#fb1616" stroke-width="0.45">1.648</text>
<text x="3453.2" y="1342.8" font-size="19.67" fill="#2a2a30" textLength="66.4" lengthAdjust="spacingAndGlyphs" stroke="#2a2a30" stroke-width="0.45">-0.599</text>
<text x="3655.3" y="1342.8" font-size="19.67" fill="#2a2a30" textLength="66.4" lengthAdjust="spacingAndGlyphs" stroke="#2a2a30" stroke-width="0.45">-0.583</text>
<text x="3453.2" y="1402.6" font-size="19.67" fill="#2a2a30" textLength="72.1" lengthAdjust="spacingAndGlyphs" stroke="#2a2a30" stroke-width="0.45">27.824</text>
<text x="3655.3" y="1402.6" font-size="19.67" fill="#2a2a30" textLength="72.1" lengthAdjust="spacingAndGlyphs" stroke="#2a2a30" stroke-width="0.45">27.780</text>
<text x="3453.2" y="1461.9" font-size="19.67" fill="#2a2a30" textLength="59.0" lengthAdjust="spacingAndGlyphs" stroke="#2a2a30" stroke-width="0.45">0.049</text>
<text x="3655.3" y="1461.9" font-size="19.67" fill="#2a2a30" textLength="59.0" lengthAdjust="spacingAndGlyphs" stroke="#2a2a30" stroke-width="0.45">0.048</text>
<text x="3389" y="1286" font-size="34" class="ls" fill="#444">ε<tspan font-size="24" dy="7">n</tspan><tspan dy="-9" dx="2" font-size="38">=</tspan></text>
<text x="3389.0" y="1345.0" font-size="29.00" class="ls" fill="#444" stroke="#444" stroke-width="0.45">α</text>
<line x1="3406.5" y1="1331.4" x2="3419.6" y2="1331.4" stroke="#aaa" stroke-width="1.6"/>
<text x="3389.0" y="1404.0" font-size="29.00" class="ls" fill="#444" stroke="#444" stroke-width="0.45">β=</text>
<text x="3389.0" y="1463.0" font-size="29.00" class="ls" fill="#444" stroke="#444" stroke-width="0.45">γ=</text>
<text x="3851.0" y="1281.0" font-size="14.20" class="ls" font-style="italic" fill="#555" stroke="#555" stroke-width="0.45">mm·mrad</text>
<line x1="3997.3" y1="1130.4" x2="4313.0" y2="1130.4" stroke="#cfcfcd" stroke-width="1.6"/>
<line x1="3975.0" y1="1128.4" x2="3982.0" y2="1128.4" stroke="#c0c0be" stroke-width="1.2"/>
<text x="3962.0" y="1121.0" font-size="20.60" fill="#26262c" stroke="#26262c" stroke-width="0.45">1</text>
<text x="4002.3" y="1121.0" font-size="19.67" fill="#26262c" textLength="32.8" lengthAdjust="spacingAndGlyphs" stroke="#26262c" stroke-width="0.45">0.6</text>
<text x="4171.0" y="1121.0" font-size="19.67" fill="#26262c" textLength="59.0" lengthAdjust="spacingAndGlyphs" stroke="#26262c" stroke-width="0.45">0.103</text>
<line x1="3997.3" y1="1164.3" x2="4313.0" y2="1164.3" stroke="#cfcfcd" stroke-width="1.6"/>
<line x1="3975.0" y1="1162.3" x2="3982.0" y2="1162.3" stroke="#c0c0be" stroke-width="1.2"/>
<text x="3962.0" y="1154.9" font-size="20.60" fill="#26262c" stroke="#26262c" stroke-width="0.45">2</text>
<text x="4002.3" y="1154.9" font-size="19.67" fill="#26262c" textLength="32.8" lengthAdjust="spacingAndGlyphs" stroke="#26262c" stroke-width="0.45">0.8</text>
<text x="4171.0" y="1154.9" font-size="19.67" fill="#26262c" textLength="32.8" lengthAdjust="spacingAndGlyphs" stroke="#26262c" stroke-width="0.45">0.1</text>
<line x1="3997.3" y1="1198.1" x2="4313.0" y2="1198.1" stroke="#cfcfcd" stroke-width="1.6"/>
<line x1="3975.0" y1="1196.1" x2="3982.0" y2="1196.1" stroke="#c0c0be" stroke-width="1.2"/>
<text x="3962.0" y="1188.8" font-size="20.60" fill="#26262c" stroke="#26262c" stroke-width="0.45">3</text>
<text x="4002.3" y="1188.8" font-size="19.67" fill="#26262c" textLength="32.8" lengthAdjust="spacingAndGlyphs" stroke="#26262c" stroke-width="0.45">1.0</text>
<text x="4171.0" y="1188.8" font-size="19.67" fill="#26262c" textLength="59.0" lengthAdjust="spacingAndGlyphs" stroke="#26262c" stroke-width="0.45">0.089</text>
<line x1="3997.3" y1="1232.0" x2="4313.0" y2="1232.0" stroke="#cfcfcd" stroke-width="1.6"/>
<line x1="3975.0" y1="1230.0" x2="3982.0" y2="1230.0" stroke="#c0c0be" stroke-width="1.2"/>
<text x="3962.0" y="1222.6" font-size="20.60" fill="#26262c" stroke="#26262c" stroke-width="0.45">4</text>
<text x="4002.3" y="1222.6" font-size="19.67" fill="#26262c" textLength="32.8" lengthAdjust="spacingAndGlyphs" stroke="#26262c" stroke-width="0.45">1.2</text>
<text x="4171.0" y="1222.6" font-size="19.67" fill="#26262c" textLength="59.0" lengthAdjust="spacingAndGlyphs" stroke="#26262c" stroke-width="0.45">0.075</text>
<line x1="3997.3" y1="1265.9" x2="4313.0" y2="1265.9" stroke="#cfcfcd" stroke-width="1.6"/>
<line x1="3975.0" y1="1263.9" x2="3982.0" y2="1263.9" stroke="#c0c0be" stroke-width="1.2"/>
<text x="3962.0" y="1256.5" font-size="20.60" fill="#26262c" stroke="#26262c" stroke-width="0.45">5</text>
<text x="4002.3" y="1256.5" font-size="19.67" fill="#26262c" textLength="32.8" lengthAdjust="spacingAndGlyphs" stroke="#26262c" stroke-width="0.45">1.4</text>
<text x="4171.0" y="1256.5" font-size="19.67" fill="#26262c" textLength="59.0" lengthAdjust="spacingAndGlyphs" stroke="#26262c" stroke-width="0.45">0.061</text>
<line x1="3997.3" y1="1299.8" x2="4313.0" y2="1299.8" stroke="#cfcfcd" stroke-width="1.6"/>
<line x1="3975.0" y1="1297.8" x2="3982.0" y2="1297.8" stroke="#c0c0be" stroke-width="1.2"/>
<text x="3962.0" y="1290.4" font-size="20.60" fill="#26262c" stroke="#26262c" stroke-width="0.45">6</text>
<text x="4002.3" y="1290.4" font-size="19.67" fill="#26262c" textLength="32.8" lengthAdjust="spacingAndGlyphs" stroke="#26262c" stroke-width="0.45">1.6</text>
<text x="4171.0" y="1290.4" font-size="19.67" fill="#26262c" textLength="59.0" lengthAdjust="spacingAndGlyphs" stroke="#26262c" stroke-width="0.45">0.052</text>
<line x1="3997.3" y1="1333.7" x2="4313.0" y2="1333.7" stroke="#cfcfcd" stroke-width="1.6"/>
<line x1="3975.0" y1="1331.7" x2="3982.0" y2="1331.7" stroke="#c0c0be" stroke-width="1.2"/>
<text x="3962.0" y="1324.3" font-size="20.60" fill="#26262c" stroke="#26262c" stroke-width="0.45">7</text>
<text x="4002.3" y="1324.3" font-size="19.67" fill="#26262c" textLength="32.8" lengthAdjust="spacingAndGlyphs" stroke="#26262c" stroke-width="0.45">1.8</text>
<text x="4171.0" y="1324.3" font-size="19.67" fill="#26262c" textLength="59.0" lengthAdjust="spacingAndGlyphs" stroke="#26262c" stroke-width="0.45">0.048</text>
<line x1="3997.3" y1="1367.6" x2="4313.0" y2="1367.6" stroke="#cfcfcd" stroke-width="1.6"/>
<line x1="3975.0" y1="1365.6" x2="3982.0" y2="1365.6" stroke="#c0c0be" stroke-width="1.2"/>
<text x="3962.0" y="1358.2" font-size="20.60" fill="#26262c" stroke="#26262c" stroke-width="0.45">8</text>
<text x="4002.3" y="1358.2" font-size="19.67" fill="#26262c" textLength="32.8" lengthAdjust="spacingAndGlyphs" stroke="#26262c" stroke-width="0.45">2.0</text>
<text x="4171.0" y="1358.2" font-size="19.67" fill="#26262c" textLength="59.0" lengthAdjust="spacingAndGlyphs" stroke="#26262c" stroke-width="0.45">0.044</text>
<line x1="3997.3" y1="1401.4" x2="4313.0" y2="1401.4" stroke="#cfcfcd" stroke-width="1.6"/>
<line x1="3975.0" y1="1399.4" x2="3982.0" y2="1399.4" stroke="#c0c0be" stroke-width="1.2"/>
<text x="3962.0" y="1392.1" font-size="20.60" fill="#26262c" stroke="#26262c" stroke-width="0.45">9</text>
<text x="4002.3" y="1392.1" font-size="19.67" fill="#26262c" textLength="32.8" lengthAdjust="spacingAndGlyphs" stroke="#26262c" stroke-width="0.45">2.2</text>
<text x="4171.0" y="1392.1" font-size="19.67" fill="#26262c" textLength="59.0" lengthAdjust="spacingAndGlyphs" stroke="#26262c" stroke-width="0.45">0.052</text>
<line x1="3997.3" y1="1435.3" x2="4313.0" y2="1435.3" stroke="#cfcfcd" stroke-width="1.6"/>
<line x1="3975.0" y1="1433.3" x2="3982.0" y2="1433.3" stroke="#c0c0be" stroke-width="1.2"/>
<text x="3962.0" y="1425.9" font-size="19.67" fill="#26262c" textLength="26.2" lengthAdjust="spacingAndGlyphs" stroke="#26262c" stroke-width="0.45">10</text>
<text x="4002.3" y="1425.9" font-size="19.67" fill="#26262c" textLength="32.8" lengthAdjust="spacingAndGlyphs" stroke="#26262c" stroke-width="0.45">2.4</text>
<text x="4171.0" y="1425.9" font-size="19.67" fill="#26262c" textLength="59.0" lengthAdjust="spacingAndGlyphs" stroke="#26262c" stroke-width="0.45">0.071</text>
<line x1="3997.3" y1="1469.2" x2="4313.0" y2="1469.2" stroke="#cfcfcd" stroke-width="1.6"/>
<line x1="3975.0" y1="1467.2" x2="3982.0" y2="1467.2" stroke="#c0c0be" stroke-width="1.2"/>
<text x="3962.0" y="1459.8" font-size="19.67" fill="#26262c" textLength="26.2" lengthAdjust="spacingAndGlyphs" stroke="#26262c" stroke-width="0.45">11</text>
<text x="4002.3" y="1459.8" font-size="19.67" fill="#26262c" textLength="32.8" lengthAdjust="spacingAndGlyphs" stroke="#26262c" stroke-width="0.45">2.6</text>
<text x="4171.0" y="1459.8" font-size="19.67" fill="#26262c" textLength="59.0" lengthAdjust="spacingAndGlyphs" stroke="#26262c" stroke-width="0.45">0.086</text>
<line x1="4167.2" y1="1096.5" x2="4167.2" y2="1469.2" stroke="#cfcfcd" stroke-width="1.6"/>
<line x1="4166.5" y1="1072.0" x2="4166.5" y2="1092.0" stroke="#e6e6e4" stroke-width="1.4"/>
<line x1="4312.0" y1="1072.0" x2="4312.0" y2="1092.0" stroke="#e6e6e4" stroke-width="1.4"/>
<text x="4082.7" y="1088.2" font-size="19.48" text-anchor="middle" fill="#26262c" textLength="35.9" lengthAdjust="spacingAndGlyphs" stroke="#26262c" stroke-width="0.45">I(A)</text>
<text x="4240.8" y="1088.2" font-size="19.48" text-anchor="middle" fill="#26262c" textLength="117.3" lengthAdjust="spacingAndGlyphs" stroke="#26262c" stroke-width="0.45">sigma(mm)</text>
<text x="2150.0" y="1596.0" font-size="20.10" fill="#222" textLength="222.5" lengthAdjust="spacingAndGlyphs" stroke="#222" stroke-width="0.45">2021/11/15 19:48:18</text>
</svg>
</div>
</body></html>
